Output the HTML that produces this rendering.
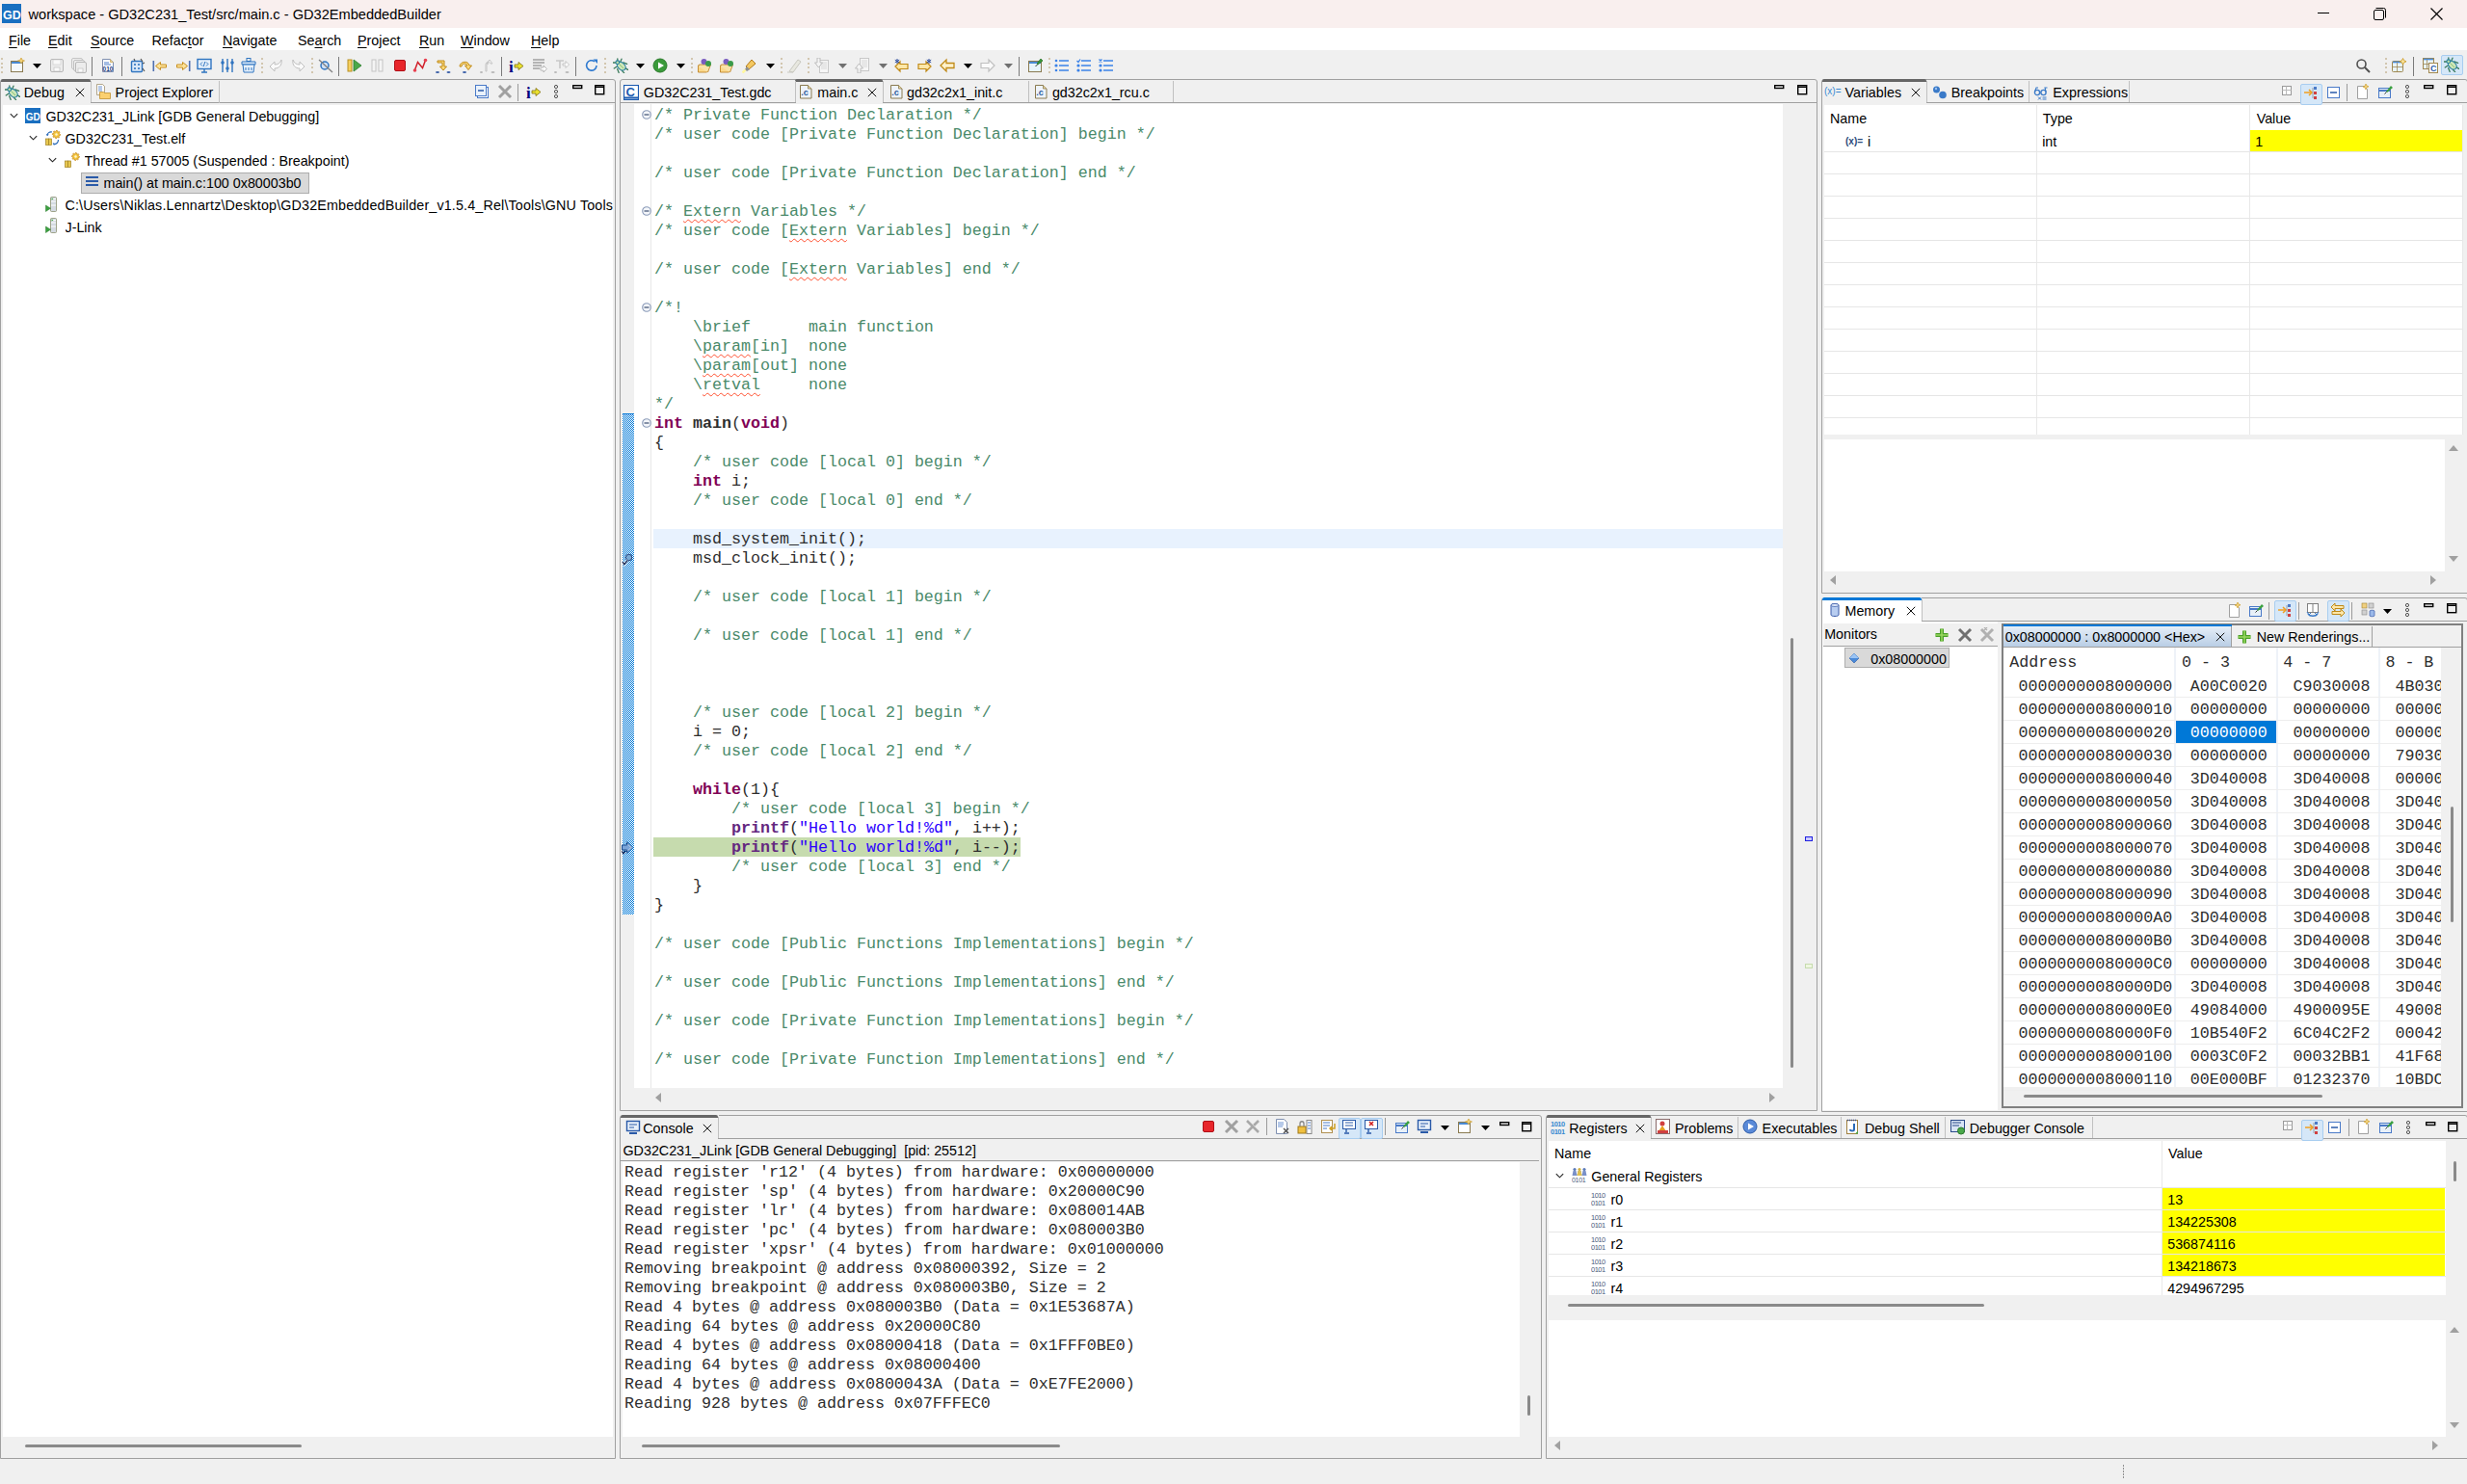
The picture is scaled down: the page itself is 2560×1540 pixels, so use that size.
<!DOCTYPE html><html><head><meta charset="utf-8"><title>GD32EmbeddedBuilder</title><style>
*{margin:0;padding:0;box-sizing:border-box}
html,body{width:2560px;height:1540px;overflow:hidden;background:#f0f0f0;font-family:"Liberation Sans",sans-serif;color:#000}
div{position:absolute}
.t{white-space:pre;font-size:14.3px;line-height:18px;color:#000}
.m{white-space:pre;font-family:"Liberation Mono",monospace;font-size:16.67px;line-height:20px;color:#2e2e2e}
.ic{line-height:0}
.ic svg{display:block}
.c{color:#4a8a6a}
.k{color:#7f0055;font-weight:bold}
.s{color:#2a00ff}
.f{color:#642880;font-weight:bold}
.b{font-weight:bold}
.sq{text-decoration:underline wavy #ff5030;text-decoration-thickness:1px;text-underline-offset:3px}
u{text-decoration:underline;text-underline-offset:2px}
</style></head><body>
<div style="left:0px;top:0px;width:2560px;height:29px;background:#f9efee"></div>
<div style="left:0px;top:29px;width:2560px;height:23px;background:#fff"></div>
<div style="left:0px;top:52px;width:2560px;height:31px;background:#f0f0f0"></div>
<div class="ic" style="left:2px;top:4px"><svg width="20" height="20" viewBox="0 0 20 20"><rect width="20" height="20" fill="#1a6fc0"/><text x="1" y="15.5" font-family="Liberation Sans" font-weight="bold" font-size="12.5" fill="#fff">GD</text></svg></div>
<div class="t" style="left:29.5px;top:5.5px;font-size:14.6px">workspace - GD32C231_Test/src/main.c - GD32EmbeddedBuilder</div>
<div style="left:2405px;top:13px;width:12px;height:1px;background:#000"></div>
<div class="ic" style="left:2463px;top:8px"><svg width="13" height="13" viewBox="0 0 13 13"><rect x="0.5" y="2.5" width="10" height="10" rx="1.5" fill="none" stroke="#000"/><path d="M2.5 0.5h8a2 2 0 0 1 2 2v8" fill="none" stroke="#000"/></svg></div>
<div class="ic" style="left:2522px;top:8px"><svg width="13" height="13" viewBox="0 0 13 13"><path d="M0.5 0.5l12 12M12.5 0.5l-12 12" stroke="#000" stroke-width="1.1"/></svg></div>
<div class="t" style="left:9px;top:32.7px;"><u>F</u>ile</div>
<div class="t" style="left:50px;top:32.7px;"><u>E</u>dit</div>
<div class="t" style="left:94px;top:32.7px;"><u>S</u>ource</div>
<div class="t" style="left:157.5px;top:32.7px;">Refac<u>t</u>or</div>
<div class="t" style="left:231px;top:32.7px;"><u>N</u>avigate</div>
<div class="t" style="left:309px;top:32.7px;">Se<u>a</u>rch</div>
<div class="t" style="left:371px;top:32.7px;"><u>P</u>roject</div>
<div class="t" style="left:435px;top:32.7px;"><u>R</u>un</div>
<div class="t" style="left:478px;top:32.7px;"><u>W</u>indow</div>
<div class="t" style="left:551px;top:32.7px;"><u>H</u>elp</div>
<div style="left:1px;top:60.0px;width:2px;height:2px;background:#c8b89a;border-radius:1px"></div>
<div style="left:1px;top:64.5px;width:2px;height:2px;background:#c8b89a;border-radius:1px"></div>
<div style="left:1px;top:69.0px;width:2px;height:2px;background:#c8b89a;border-radius:1px"></div>
<div style="left:1px;top:73.5px;width:2px;height:2px;background:#c8b89a;border-radius:1px"></div>
<div class="ic" style="left:10px;top:60px"><svg width="16" height="16" viewBox="0 0 16 16"><rect x="1.5" y="3.5" width="12" height="11" fill="#f4f8fc" stroke="#8a7a50"/><rect x="2" y="4" width="11" height="2" fill="#4b8bd4"/><path d="M12 0l1.2 2.3 2.3.7-2.3.9L12 6l-1.2-2.1L8.5 3l2.3-.7z" fill="#f5d37a" stroke="#c8961e" stroke-width=".6"/></svg></div>
<div class="ic" style="left:51px;top:60px"><svg width="16" height="16" viewBox="0 0 16 16"><rect x="1.5" y="1.5" width="13" height="13" rx="1.5" fill="#ececec" stroke="#b8b8b8"/><rect x="4" y="2" width="8" height="5" fill="#f8f8f8" stroke="#c8c8c8" stroke-width=".6"/><rect x="5" y="10" width="6" height="4" fill="#fafafa" stroke="#b8b8b8" stroke-width=".6"/></svg></div>
<div class="ic" style="left:74px;top:60px"><svg width="16" height="16" viewBox="0 0 16 16"><rect x="0.5" y="0.5" width="11" height="11" rx="1.5" fill="#eee" stroke="#c4c4c4"/><rect x="2.5" y="2.5" width="11" height="11" rx="1.5" fill="#eee" stroke="#c0c0c0"/><rect x="4.5" y="4.5" width="11" height="11" rx="1.5" fill="#ececec" stroke="#b8b8b8"/><rect x="7" y="11" width="5" height="4" fill="#fafafa" stroke="#b8b8b8" stroke-width=".6"/></svg></div>
<div class="ic" style="left:104px;top:60px"><svg width="16" height="16" viewBox="0 0 16 16"><path d="M2.5 1.5h8l3 3v10h-11z" fill="#fff" stroke="#7f8fb0"/><path d="M10.5 1.5v3h3" fill="#f0d89a" stroke="#c8a860" stroke-width=".8"/><path d="M4 5h5M4 7h7" stroke="#4a7ac8" stroke-width="1"/><text x="2.6" y="14.3" font-family="Liberation Sans" font-size="6.5" font-weight="bold" fill="#1f3f7f">010</text></svg></div>
<div class="ic" style="left:135px;top:60px"><svg width="16" height="16" viewBox="0 0 16 16"><rect x="1.5" y="3.5" width="11" height="11" rx="1" fill="#dbe9f8" stroke="#2f74c0" stroke-width="1.4"/><circle cx="5" cy="7" r="1.1" fill="#2f74c0"/><circle cx="9" cy="7" r="1.1" fill="#2f74c0"/><circle cx="5" cy="11" r="1.1" fill="#2f74c0"/><circle cx="9" cy="11" r="1.1" fill="#2f74c0"/><path d="M11 1l2 3M4 1l1 2M13 6l2 -1M13 11l2 3" stroke="#555" stroke-width="1.2"/></svg></div>
<div class="ic" style="left:158px;top:60px"><svg width="16" height="16" viewBox="0 0 16 16"><rect x="0.5" y="3" width="1.6" height="11" fill="#5070b0"/><path d="M3.5 8.5l5-4v2.5h6v3h-6v2.5z" fill="#fde39a" stroke="#c89020" stroke-width="1"/></svg></div>
<div class="ic" style="left:182px;top:60px"><svg width="16" height="16" viewBox="0 0 16 16"><rect x="13.9" y="3" width="1.6" height="11" fill="#5070b0"/><path d="M12.5 8.5l-5-4v2.5h-6v3h6v2.5z" fill="#fde39a" stroke="#c89020" stroke-width="1"/></svg></div>
<div class="ic" style="left:204px;top:60px"><svg width="16" height="16" viewBox="0 0 16 16"><rect x="1" y="1.5" width="14" height="10" fill="#e6f0fa" stroke="#2f74c0" stroke-width="1.4"/><path d="M6 4.5l-2 2 2 2M10 4.5l2 2-2 2M8.8 4l-1.6 5" stroke="#2f74c0" fill="none" stroke-width="1"/><path d="M8 12v2.5M5 15h6" stroke="#2f74c0" stroke-width="1.4"/></svg></div>
<div class="ic" style="left:228px;top:60px"><svg width="16" height="16" viewBox="0 0 16 16"><path d="M3 1v14M8 1v14M13 1v14" stroke="#2f74c0" stroke-width="1.4"/><circle cx="3" cy="5" r="1.8" fill="#2f74c0"/><circle cx="8" cy="11" r="1.8" fill="#2f74c0"/><circle cx="13" cy="5" r="1.8" fill="#2f74c0"/></svg></div>
<div class="ic" style="left:250px;top:60px"><svg width="16" height="16" viewBox="0 0 16 16"><rect x="6" y="0.5" width="4" height="3" fill="none" stroke="#2f74c0"/><path d="M1 4h14v3H1z" fill="#d8e8f8" stroke="#2f74c0"/><path d="M2 7h12l-1 8H3z" fill="#e8f2fc" stroke="#2f74c0"/><path d="M5 10v3M8 10v3M11 10v3" stroke="#2f74c0"/></svg></div>
<div class="ic" style="left:279px;top:60px"><svg width="16" height="16" viewBox="0 0 16 16"><path d="M13 2c1 5-2 9-7 9v3L1 9l5-5v3c4 0 6-2 7-5z" fill="#fafafa" stroke="#c0c0c0"/></svg></div>
<div class="ic" style="left:301px;top:60px"><svg width="16" height="16" viewBox="0 0 16 16"><path d="M3 2c-1 5 2 9 7 9v3l5-5-5-5v3c-4 0-6-2-7-5z" fill="#fafafa" stroke="#c0c0c0"/></svg></div>
<div class="ic" style="left:330px;top:60px"><svg width="16" height="16" viewBox="0 0 16 16"><circle cx="7" cy="8" r="4" fill="#cfe0f5" stroke="#2f74c0" stroke-width="1.5"/><path d="M1 2l14 13" stroke="#808080" stroke-width="1.3"/></svg></div>
<div class="ic" style="left:360px;top:60px"><svg width="16" height="16" viewBox="0 0 16 16"><rect x="1" y="2" width="4" height="12" fill="#f6d060" stroke="#b89020"/><path d="M7 2l8 6-8 6z" fill="#4aa84a" stroke="#2c7c2c" stroke-width=".8"/></svg></div>
<div class="ic" style="left:384px;top:60px"><svg width="16" height="16" viewBox="0 0 16 16"><rect x="2" y="2" width="4" height="12" fill="#f4f4f4" stroke="#c4c4c4"/><rect x="9" y="2" width="4" height="12" fill="#f4f4f4" stroke="#c4c4c4"/></svg></div>
<div class="ic" style="left:407px;top:60px"><svg width="16" height="16" viewBox="0 0 16 16"><rect x="2.5" y="2.5" width="11" height="11" rx="1.5" fill="#e8262b" stroke="#b01018"/></svg></div>
<div class="ic" style="left:428px;top:60px"><svg width="16" height="16" viewBox="0 0 16 16"><path d="M2.5 12.5l3-8 5 6 3-8" fill="none" stroke="#d0202a" stroke-width="1.5"/><circle cx="2.5" cy="13" r="1.8" fill="#e84050"/><circle cx="13.5" cy="2.5" r="1.8" fill="#e84050"/></svg></div>
<div class="ic" style="left:452px;top:60px"><svg width="16" height="16" viewBox="0 0 16 16"><path d="M2 3h7v6h2.5L8 13 4.5 9H7V5H2z" fill="#fbd979" stroke="#c08a18" stroke-width="1"/><ellipse cx="2" cy="15" rx="2" ry="1" fill="#3a5fa8"/><ellipse cx="13.5" cy="15" rx="2" ry="1" fill="#3a5fa8"/></svg></div>
<div class="ic" style="left:475px;top:60px"><svg width="16" height="16" viewBox="0 0 16 16"><path d="M2 9c0-5 9-7 10 -1h2.5l-3.5 4.5L7.5 8H10c-1-3-6-2-6 1z" fill="#fbd979" stroke="#c08a18" stroke-width="1"/><ellipse cx="7" cy="15" rx="2" ry="1" fill="#3a5fa8"/></svg></div>
<div class="ic" style="left:498px;top:60px"><svg width="16" height="16" viewBox="0 0 16 16"><path d="M6 14V7c0-3 4-4 5-1h2L10 2 7 6h2c-1-1-2 0-2 1v7z" fill="#fafafa" stroke="#c4c4c4"/><ellipse cx="1.5" cy="15" rx="1.5" ry="1" fill="#b8b8b8"/><ellipse cx="13.5" cy="15" rx="2" ry="1" fill="#b8b8b8"/></svg></div>
<div class="ic" style="left:528px;top:60px"><svg width="16" height="16" viewBox="0 0 16 16"><text x="0" y="15" font-family="Liberation Serif" font-weight="bold" font-size="17" fill="#000080">i</text><path d="M6 7h4V4.5L15 8.5l-5 4V10H6z" fill="#e8e030" stroke="#807010" stroke-width=".8"/></svg></div>
<div class="ic" style="left:552px;top:60px"><svg width="16" height="16" viewBox="0 0 16 16"><path d="M1 2h12M1 5h12M1 8h9M1 11h7" stroke="#a0a0a0" stroke-width="1.6"/><path d="M9 10h3V8l3.5 3.5L12 15v-2H9z" fill="#fff" stroke="#b0b0b0" stroke-width=".9"/></svg></div>
<div class="ic" style="left:575px;top:60px"><svg width="16" height="16" viewBox="0 0 16 16"><path d="M2 3h8M6 3v8" stroke="#c8c8c8" stroke-width="1.6"/><path d="M9 6h3V3.5L15.5 7 12 10.5V8H9z" fill="#fff" stroke="#c0c0c0" stroke-width=".9"/><ellipse cx="1.5" cy="15" rx="1.5" ry="1" fill="#b8b8b8"/><ellipse cx="13.5" cy="15" rx="2" ry="1" fill="#b8b8b8"/></svg></div>
<div class="ic" style="left:606px;top:60px"><svg width="16" height="16" viewBox="0 0 16 16"><path d="M13 8a5.2 5.2 0 1 1-2-4.2" fill="none" stroke="#2f7ad0" stroke-width="1.6"/><path d="M9.5 1.5h4.5v4.5z" fill="#2f7ad0"/></svg></div>
<div class="ic" style="left:636px;top:60px"><svg width="16" height="16" viewBox="0 0 16 16"><path d="M4.8 0.8v3M9 1.2l-1 2.6M0 5h3.2M1.2 11l3-2M10.8 4.8l3.8 1.6M12.4 10.4l3.2 2M4.6 11.6l1.6 3.8M9.4 13.2l2.2 2.4" stroke="#3a7a5a" stroke-width="1.3" stroke-linecap="round"/><ellipse cx="8.8" cy="8.6" rx="3.6" ry="5" transform="rotate(-45 8.8 8.6)" fill="#cde6b8" stroke="#2a80a0" stroke-width="1.2"/><path d="M7 7l4 4" stroke="#8cc47a" stroke-width="1"/><circle cx="4.8" cy="4.8" r="1.9" fill="#b8dca8" stroke="#2a80a0" stroke-width="1.1"/></svg></div>
<div class="ic" style="left:677px;top:60px"><svg width="16" height="16" viewBox="0 0 16 16"><circle cx="8" cy="8" r="7" fill="#3a9a3a" stroke="#2a7a2a"/><path d="M6 4.5l6 3.5-6 3.5z" fill="#fff"/></svg></div>
<div class="ic" style="left:723px;top:60px"><svg width="17" height="16" viewBox="0 0 16 16"><path d="M1 8h4l1 1h6l-2 6H1z" fill="#fbd88a" stroke="#c08428" stroke-width=".9"/><path d="M1 9l1-2h12l-3 8" fill="#f9e2a8" stroke="#c08428" stroke-width=".9"/><circle cx="7" cy="4" r="3" fill="#7a5cc0"/><circle cx="11.5" cy="6" r="3" fill="#3a9a4a"/></svg></div>
<div class="ic" style="left:746px;top:60px"><svg width="17" height="16" viewBox="0 0 16 16"><path d="M1 8h4l1 1h6l-2 6H1z" fill="#fbd88a" stroke="#c08428" stroke-width=".9"/><path d="M1 9l1-2h12l-3 8" fill="#f9e2a8" stroke="#c08428" stroke-width=".9"/><circle cx="7" cy="4" r="3" fill="#7a5cc0"/><circle cx="11.5" cy="6" r="3" fill="#3a9a4a"/></svg></div>
<div class="ic" style="left:770px;top:60px"><svg width="16" height="16" viewBox="0 0 16 16"><path d="M3 14l-1.5 1.5M4 9l6-7 4 4-7 6z" fill="#f4c860" stroke="#b07818" stroke-width="1"/><path d="M3 12l2-3 3 3-3 2z" fill="#909090"/><path d="M0.5 15.5l3-3" stroke="#fff8a0" stroke-width="2.5"/></svg></div>
<div class="ic" style="left:816px;top:60px"><svg width="16" height="16" viewBox="0 0 16 16"><path d="M1 15h6M3 14l9-12 3 2-8 11z" fill="#e8e8e0" stroke="#c8c8c0" stroke-width="1"/></svg></div>
<div class="ic" style="left:845px;top:60px"><svg width="16" height="16" viewBox="0 0 16 16"><rect x="5.5" y="2.5" width="9" height="13" fill="#f6f6f6" stroke="#c8c8c8"/><path d="M7 5h6M7 7h6M7 9h6M7 11h6" stroke="#d8d8d8"/><path d="M3 0h3v5h2.5L4.5 10 0.5 5H3z" fill="#f4f4f4" stroke="#b8b8b8" stroke-width=".9"/></svg></div>
<div class="ic" style="left:887px;top:60px"><svg width="16" height="16" viewBox="0 0 16 16"><rect x="5.5" y="0.5" width="9" height="13" fill="#f6f6f6" stroke="#c8c8c8"/><path d="M7 3h6M7 5h6M7 7h6M7 9h6" stroke="#d8d8d8"/><path d="M3 16h3v-5h2.5L4.5 6 0.5 11H3z" fill="#f4f4f4" stroke="#b8b8b8" stroke-width=".9"/></svg></div>
<div class="ic" style="left:928px;top:60px"><svg width="16" height="16" viewBox="0 0 16 16"><path d="M1 9l5-5v2.5h8v5H6v2.5z" fill="#fde7a8" stroke="#c08a18" stroke-width="1.2"/><path d="M3 1v5M0.8 2.2l4.4 2.6M0.8 4.8l4.4-2.6" stroke="#2a4a9a" stroke-width="1"/></svg></div>
<div class="ic" style="left:951px;top:60px"><svg width="16" height="16" viewBox="0 0 16 16"><path d="M15 9l-5-5v2.5H2v5h8v2.5z" fill="#fde7a8" stroke="#c08a18" stroke-width="1.2"/><path d="M13 1v5M10.8 2.2l4.4 2.6M10.8 4.8l4.4-2.6" stroke="#2a4a9a" stroke-width="1"/></svg></div>
<div class="ic" style="left:975px;top:60px"><svg width="16" height="16" viewBox="0 0 16 16"><path d="M1 8l6-6v3.5h8v5H7V14z" fill="#fff2cc" stroke="#c08a18" stroke-width="1.3"/></svg></div>
<div class="ic" style="left:1017px;top:60px"><svg width="16" height="16" viewBox="0 0 16 16"><path d="M15 8l-6-6v3.5H1v5h8V14z" fill="#fafafa" stroke="#c0c0c0" stroke-width="1.2"/></svg></div>
<div class="ic" style="left:1066px;top:60px"><svg width="16" height="16" viewBox="0 0 16 16"><rect x="1.5" y="3.5" width="13" height="11" fill="#e8f4fb" stroke="#8a7a50"/><rect x="2" y="4" width="12" height="2" fill="#4b8bd4"/><path d="M10 6l4-5 2 2-5 4z" fill="#3a9a3a" stroke="#1e6a1e" stroke-width=".7"/><path d="M8.5 9l2-2" stroke="#333" stroke-width="1"/></svg></div>
<div class="ic" style="left:1094px;top:60px"><svg width="16" height="16" viewBox="0 0 16 16"><circle cx="2" cy="3" r="1.3" fill="#3b82e8"/><circle cx="2" cy="8" r="1.6" fill="#3b82e8"/><circle cx="2" cy="13" r="1.3" fill="#3b82e8"/><path d="M5 3h10M5 8h10M5 13h10" stroke="#3b82e8" stroke-width="1.6"/></svg></div>
<div class="ic" style="left:1117px;top:60px"><svg width="16" height="16" viewBox="0 0 16 16"><path d="M0.5 3l1.5 1.5L4 1.5" stroke="#3b82e8" fill="none" stroke-width="1.3"/><circle cx="2" cy="8" r="1.6" fill="#3b82e8"/><circle cx="2" cy="13" r="1.6" fill="#3b82e8"/><path d="M5 3h10M5 8h10M5 13h10" stroke="#3b82e8" stroke-width="1.6"/></svg></div>
<div class="ic" style="left:1140px;top:60px"><svg width="16" height="16" viewBox="0 0 16 16"><path d="M0.5 1.5l3 3M3.5 1.5l-3 3" stroke="#3b82e8" stroke-width="1.3"/><circle cx="2" cy="8" r="1.6" fill="#3b82e8"/><circle cx="2" cy="13" r="1.6" fill="#3b82e8"/><path d="M5 3h10M5 8h10M5 13h10" stroke="#3b82e8" stroke-width="1.6"/></svg></div>
<div class="ic" style="left:2444px;top:60px"><svg width="16" height="16" viewBox="0 0 16 16"><circle cx="6.5" cy="6.5" r="4.5" fill="none" stroke="#505050" stroke-width="1.6"/><path d="M10 10l5 5" stroke="#505050" stroke-width="2"/></svg></div>
<div class="ic" style="left:2482px;top:60px"><svg width="16" height="16" viewBox="0 0 16 16"><rect x="0.5" y="3.5" width="11" height="11" rx="1" fill="#e8f4fc" stroke="#a08850"/><path d="M1 4.5h10" stroke="#4b8bd4" stroke-width="1.6"/><path d="M0.5 9.5h11M5.5 5v9" stroke="#a08850" stroke-width=".8"/><path d="M11.5 0.5l1.2 2.3 2.3 1-2.3 1-1.2 2.3-1.2-2.3-2.3-1 2.3-1z" fill="#fbe49a" stroke="#c8961e" stroke-width=".8"/></svg></div>
<div class="ic" style="left:2514px;top:60px"><svg width="16" height="16" viewBox="0 0 16 16"><rect x="0.5" y="0.5" width="11" height="11" fill="#e8f4fc" stroke="#a08850"/><path d="M1 1.5h10" stroke="#4b8bd4" stroke-width="1.6"/><path d="M0.5 6.5h11M4.5 2v9" stroke="#a08850" stroke-width=".8"/><rect x="6.5" y="5.5" width="9" height="10" fill="#fff" stroke="#a08850"/><text x="8" y="14" font-family="Liberation Sans" font-weight="bold" font-size="9" fill="#2a5aa8">C</text></svg></div>
<div class="ic" style="left:33px;top:64px"><svg width="11" height="8" viewBox="0 0 11 8"><path d="M1 2h9l-4.5 5z" fill="#000"/></svg></div>
<div class="ic" style="left:659px;top:64px"><svg width="11" height="8" viewBox="0 0 11 8"><path d="M1 2h9l-4.5 5z" fill="#000"/></svg></div>
<div class="ic" style="left:701px;top:64px"><svg width="11" height="8" viewBox="0 0 11 8"><path d="M1 2h9l-4.5 5z" fill="#000"/></svg></div>
<div class="ic" style="left:794px;top:64px"><svg width="11" height="8" viewBox="0 0 11 8"><path d="M1 2h9l-4.5 5z" fill="#000"/></svg></div>
<div class="ic" style="left:999px;top:64px"><svg width="11" height="8" viewBox="0 0 11 8"><path d="M1 2h9l-4.5 5z" fill="#000"/></svg></div>
<div class="ic" style="left:869px;top:64px"><svg width="11" height="8" viewBox="0 0 11 8"><path d="M1 2h9l-4.5 5z" fill="#707070"/></svg></div>
<div class="ic" style="left:911px;top:64px"><svg width="11" height="8" viewBox="0 0 11 8"><path d="M1 2h9l-4.5 5z" fill="#707070"/></svg></div>
<div class="ic" style="left:1041px;top:64px"><svg width="11" height="8" viewBox="0 0 11 8"><path d="M1 2h9l-4.5 5z" fill="#707070"/></svg></div>
<div style="left:95px;top:59px;width:1px;height:20px;background:#7a7a7a"></div>
<div style="left:126px;top:59px;width:1px;height:20px;background:#7a7a7a"></div>
<div style="left:271px;top:60.0px;width:2px;height:2px;background:#c8b89a;border-radius:1px"></div>
<div style="left:271px;top:64.5px;width:2px;height:2px;background:#c8b89a;border-radius:1px"></div>
<div style="left:271px;top:69.0px;width:2px;height:2px;background:#c8b89a;border-radius:1px"></div>
<div style="left:271px;top:73.5px;width:2px;height:2px;background:#c8b89a;border-radius:1px"></div>
<div style="left:323px;top:60.0px;width:2px;height:2px;background:#c8b89a;border-radius:1px"></div>
<div style="left:323px;top:64.5px;width:2px;height:2px;background:#c8b89a;border-radius:1px"></div>
<div style="left:323px;top:69.0px;width:2px;height:2px;background:#c8b89a;border-radius:1px"></div>
<div style="left:323px;top:73.5px;width:2px;height:2px;background:#c8b89a;border-radius:1px"></div>
<div style="left:351px;top:59px;width:1px;height:20px;background:#7a7a7a"></div>
<div style="left:520px;top:59px;width:1px;height:20px;background:#7a7a7a"></div>
<div style="left:597px;top:59px;width:1px;height:20px;background:#7a7a7a"></div>
<div style="left:627px;top:60.0px;width:2px;height:2px;background:#c8b89a;border-radius:1px"></div>
<div style="left:627px;top:64.5px;width:2px;height:2px;background:#c8b89a;border-radius:1px"></div>
<div style="left:627px;top:69.0px;width:2px;height:2px;background:#c8b89a;border-radius:1px"></div>
<div style="left:627px;top:73.5px;width:2px;height:2px;background:#c8b89a;border-radius:1px"></div>
<div style="left:717px;top:60.0px;width:2px;height:2px;background:#c8b89a;border-radius:1px"></div>
<div style="left:717px;top:64.5px;width:2px;height:2px;background:#c8b89a;border-radius:1px"></div>
<div style="left:717px;top:69.0px;width:2px;height:2px;background:#c8b89a;border-radius:1px"></div>
<div style="left:717px;top:73.5px;width:2px;height:2px;background:#c8b89a;border-radius:1px"></div>
<div style="left:810px;top:60.0px;width:2px;height:2px;background:#c8b89a;border-radius:1px"></div>
<div style="left:810px;top:64.5px;width:2px;height:2px;background:#c8b89a;border-radius:1px"></div>
<div style="left:810px;top:69.0px;width:2px;height:2px;background:#c8b89a;border-radius:1px"></div>
<div style="left:810px;top:73.5px;width:2px;height:2px;background:#c8b89a;border-radius:1px"></div>
<div style="left:838px;top:60.0px;width:2px;height:2px;background:#c8b89a;border-radius:1px"></div>
<div style="left:838px;top:64.5px;width:2px;height:2px;background:#c8b89a;border-radius:1px"></div>
<div style="left:838px;top:69.0px;width:2px;height:2px;background:#c8b89a;border-radius:1px"></div>
<div style="left:838px;top:73.5px;width:2px;height:2px;background:#c8b89a;border-radius:1px"></div>
<div style="left:1057px;top:59px;width:1px;height:20px;background:#7a7a7a"></div>
<div style="left:1088px;top:60.0px;width:2px;height:2px;background:#c8b89a;border-radius:1px"></div>
<div style="left:1088px;top:64.5px;width:2px;height:2px;background:#c8b89a;border-radius:1px"></div>
<div style="left:1088px;top:69.0px;width:2px;height:2px;background:#c8b89a;border-radius:1px"></div>
<div style="left:1088px;top:73.5px;width:2px;height:2px;background:#c8b89a;border-radius:1px"></div>
<div style="left:2475px;top:60.0px;width:2px;height:2px;background:#c8b89a;border-radius:1px"></div>
<div style="left:2475px;top:64.5px;width:2px;height:2px;background:#c8b89a;border-radius:1px"></div>
<div style="left:2475px;top:69.0px;width:2px;height:2px;background:#c8b89a;border-radius:1px"></div>
<div style="left:2475px;top:73.5px;width:2px;height:2px;background:#c8b89a;border-radius:1px"></div>
<div style="left:2504px;top:59px;width:1px;height:20px;background:#7a7a7a"></div>
<div style="left:2533px;top:57px;width:23px;height:21px;background:#d5e7f8;border:1px solid #a8cdf0;border-radius:2px"></div>
<div class="ic" style="left:2536px;top:59px"><svg width="16" height="16" viewBox="0 0 16 16"><path d="M4.8 0.8v3M9 1.2l-1 2.6M0 5h3.2M1.2 11l3-2M10.8 4.8l3.8 1.6M12.4 10.4l3.2 2M4.6 11.6l1.6 3.8M9.4 13.2l2.2 2.4" stroke="#3a7a5a" stroke-width="1.3" stroke-linecap="round"/><ellipse cx="8.8" cy="8.6" rx="3.6" ry="5" transform="rotate(-45 8.8 8.6)" fill="#cde6b8" stroke="#2a80a0" stroke-width="1.2"/><path d="M7 7l4 4" stroke="#8cc47a" stroke-width="1"/><circle cx="4.8" cy="4.8" r="1.9" fill="#b8dca8" stroke="#2a80a0" stroke-width="1.1"/></svg></div>
<div style="left:0px;top:82px;width:639px;height:1432px;border:1px solid #a0a0a0;border-radius:3px 3px 0 0;background:#f0f0f0"></div>
<div style="left:94px;top:106px;width:544px;height:1px;background:#a0a0a0"></div>
<div style="left:227px;top:84px;width:1px;height:23px;background:#c0c0c0"></div>
<div style="left:1px;top:82px;width:93px;height:3px;background:#666;border-radius:2px 2px 0 0"></div>
<div style="left:94px;top:84px;width:1px;height:22px;background:#c0c0c0"></div>
<div class="ic" style="left:5px;top:88px"><svg width="16" height="16" viewBox="0 0 16 16"><path d="M4.8 0.8v3M9 1.2l-1 2.6M0 5h3.2M1.2 11l3-2M10.8 4.8l3.8 1.6M12.4 10.4l3.2 2M4.6 11.6l1.6 3.8M9.4 13.2l2.2 2.4" stroke="#3a7a5a" stroke-width="1.3" stroke-linecap="round"/><ellipse cx="8.8" cy="8.6" rx="3.6" ry="5" transform="rotate(-45 8.8 8.6)" fill="#cde6b8" stroke="#2a80a0" stroke-width="1.2"/><path d="M7 7l4 4" stroke="#8cc47a" stroke-width="1"/><circle cx="4.8" cy="4.8" r="1.9" fill="#b8dca8" stroke="#2a80a0" stroke-width="1.1"/></svg></div>
<div class="t" style="left:24.8px;top:86.9px;">Debug</div>
<div class="ic" style="left:78px;top:91px"><svg width="10" height="10" viewBox="0 0 10 10"><path d="M0.8 0.8l8.4 8.4M9.2 0.8l-8.4 8.4" stroke="#111" stroke-width="1"/></svg></div>
<div class="ic" style="left:99px;top:87px"><svg width="16" height="16" viewBox="0 0 16 16"><path d="M1.5 0.5h6l2 2v9h-8z" fill="#fff" stroke="#a09070" stroke-width=".8"/><path d="M3 3h4M3 5h4M3 7h4" stroke="#4a7ac8" stroke-width=".8"/><path d="M4.5 8.5h4l1 1h6v6h-11z" fill="#fbd070" stroke="#c09030" stroke-width=".8"/></svg></div>
<div class="t" style="left:119.6px;top:86.9px;">Project Explorer</div>
<div class="ic" style="left:492px;top:87px"><svg width="16" height="16" viewBox="0 0 16 16"><rect x="3.5" y="3.5" width="11" height="11" fill="#fff" stroke="#4a7ac8"/><rect x="1.5" y="1.5" width="11" height="11" fill="#eaf2fb" stroke="#4a7ac8"/><path d="M4 7h6" stroke="#2a5aa8" stroke-width="1.5"/></svg></div>
<div class="ic" style="left:516px;top:87px"><svg width="16" height="16" viewBox="0 0 16 16"><path d="M2 2l12 12M14 2L2 14" stroke="#a0a0a0" stroke-width="3"/></svg></div>
<div style="left:537px;top:87px;width:1px;height:18px;background:#9a9a9a"></div>
<div class="ic" style="left:546px;top:87px"><svg width="16" height="16" viewBox="0 0 16 16"><text x="0" y="15" font-family="Liberation Serif" font-weight="bold" font-size="17" fill="#000080">i</text><path d="M6 7h4V4.5L15 8.5l-5 4V10H6z" fill="#e8e030" stroke="#807010" stroke-width=".8"/></svg></div>
<div class="ic" style="left:574px;top:88px"><svg width="6" height="14" viewBox="0 0 6 14"><circle cx="3" cy="2" r="1.6" fill="none" stroke="#444" stroke-width=".9"/><circle cx="3" cy="7" r="1.6" fill="none" stroke="#444" stroke-width=".9"/><circle cx="3" cy="12" r="1.6" fill="none" stroke="#444" stroke-width=".9"/></svg></div>
<div class="ic" style="left:594px;top:88px"><svg width="11" height="5" viewBox="0 0 11 5"><rect x="0.7" y="0.7" width="9" height="2.8" fill="none" stroke="#000" stroke-width="1.4"/></svg></div>
<div class="ic" style="left:617px;top:88px"><svg width="11" height="11" viewBox="0 0 11 11"><rect x="0.7" y="0.7" width="9" height="9" fill="none" stroke="#000" stroke-width="1.4"/><path d="M0.7 2.3h9" stroke="#000" stroke-width="1.4"/></svg></div>
<div style="left:3px;top:109px;width:633px;height:1382px;background:#fff"></div>
<div class="ic" style="left:9.6px;top:117.4px"><svg width="10" height="7" viewBox="0 0 10 7"><path d="M0.8 1.2l3.7 3.6 3.7-3.6" fill="none" stroke="#222" stroke-width="1.1"/></svg></div>
<div class="ic" style="left:26px;top:111.9px"><svg width="16" height="16" viewBox="0 0 16 16"><rect width="16" height="16" fill="#1a6fc0"/><text x="0.8" y="12.5" font-family="Liberation Sans" font-weight="bold" font-size="10" fill="#fff">GD</text></svg></div>
<div class="t" style="left:47.5px;top:112.4px;width:588.5px;overflow:hidden">GD32C231_JLink [GDB General Debugging]</div>
<div class="ic" style="left:29.6px;top:140.3px"><svg width="10" height="7" viewBox="0 0 10 7"><path d="M0.8 1.2l3.7 3.6 3.7-3.6" fill="none" stroke="#222" stroke-width="1.1"/></svg></div>
<div class="ic" style="left:47px;top:134.8px"><svg width="16" height="16" viewBox="0 0 16 16"><rect x="0.5" y="9" width="3" height="6.5" fill="#e8c850" stroke="#a08020" stroke-width=".7"/><rect x="3.5" y="9" width="3" height="6.5" fill="#e8c850" stroke="#a08020" stroke-width=".7"/><path d="M15.70 4.50 L15.62 5.32 L14.27 5.65 L13.99 6.17 L14.47 7.47 L13.83 7.99 L12.65 7.27 L12.09 7.44 L11.50 8.70 L10.68 8.62 L10.35 7.27 L9.83 6.99 L8.53 7.47 L8.01 6.83 L8.73 5.65 L8.56 5.09 L7.30 4.50 L7.38 3.68 L8.73 3.35 L9.01 2.83 L8.53 1.53 L9.17 1.01 L10.35 1.73 L10.91 1.56 L11.50 0.30 L12.32 0.38 L12.65 1.73 L13.17 2.01 L14.47 1.53 L14.99 2.17 L14.27 3.35 L14.44 3.91Z" fill="#f6c840" stroke="#c08010" stroke-width=".7"/><circle cx="11.5" cy="4.5" r="1.2" fill="#fff6d0"/><path d="M2 5.5c0-2.5 2.5-4 5-3.5M13.5 10c0 2.5-2 4.5-5 5" fill="none" stroke="#2a6ab8" stroke-width="1.2"/><path d="M1 4l1 2.2 1.8-1.6zM7.5 14l2 1.5-.3-2.4z" fill="#2a6ab8"/></svg></div>
<div class="t" style="left:67.5px;top:135.3px;width:568.5px;overflow:hidden">GD32C231_Test.elf</div>
<div class="ic" style="left:49.6px;top:163.2px"><svg width="10" height="7" viewBox="0 0 10 7"><path d="M0.8 1.2l3.7 3.6 3.7-3.6" fill="none" stroke="#222" stroke-width="1.1"/></svg></div>
<div class="ic" style="left:67px;top:157.7px"><svg width="16" height="16" viewBox="0 0 16 16"><rect x="0.5" y="9" width="3" height="6.5" fill="#e8c850" stroke="#a08020" stroke-width=".7"/><rect x="3.5" y="9" width="3" height="6.5" fill="#e8c850" stroke="#a08020" stroke-width=".7"/><path d="M15.50 4.50 L15.42 5.28 L14.18 5.61 L13.91 6.11 L14.33 7.33 L13.72 7.83 L12.61 7.18 L12.07 7.34 L11.50 8.50 L10.72 8.42 L10.39 7.18 L9.89 6.91 L8.67 7.33 L8.17 6.72 L8.82 5.61 L8.66 5.07 L7.50 4.50 L7.58 3.72 L8.82 3.39 L9.09 2.89 L8.67 1.67 L9.28 1.17 L10.39 1.82 L10.93 1.66 L11.50 0.50 L12.28 0.58 L12.61 1.82 L13.11 2.09 L14.33 1.67 L14.83 2.28 L14.18 3.39 L14.34 3.93Z" fill="#f6c840" stroke="#c08010" stroke-width=".7"/><circle cx="11.5" cy="4.5" r="1.2" fill="#fff6d0"/></svg></div>
<div class="t" style="left:87.5px;top:158.2px;width:548.5px;overflow:hidden">Thread #1 57005 (Suspended : Breakpoint)</div>
<div style="left:84px;top:178.5px;width:237px;height:22px;background:#d9d9d9;border:1px solid #adadad"></div>
<div class="ic" style="left:88px;top:180.6px"><svg width="16" height="16" viewBox="0 0 16 16"><path d="M1 3h13M1 7h13M1 11h13" stroke="#2a5aa8" stroke-width="2"/></svg></div>
<div class="t" style="left:107.5px;top:181.1px;width:528.5px;overflow:hidden">main() at main.c:100 0x80003b0</div>
<div class="ic" style="left:47px;top:203.5px"><svg width="16" height="16" viewBox="0 0 16 16"><rect x="5.5" y="0.5" width="6" height="15" rx="1" fill="#d4dae2" stroke="#8a9070" stroke-width=".8"/><path d="M6 2.5h5M6 5h5M6 9h5" stroke="#fff" stroke-width="1"/><path d="M6.5 1.5l2 1-2 1z" fill="#3aa040"/><path d="M0.5 9l5 3.2-5 3.3z" fill="#3aa040" stroke="#2a7a2a" stroke-width=".5"/></svg></div>
<div class="t" style="left:67.5px;top:204.0px;width:568.5px;overflow:hidden;letter-spacing:0.16px">C:\Users\Niklas.Lennartz\Desktop\GD32EmbeddedBuilder_v1.5.4_Rel\Tools\GNU Tools for ARM Embedded Processors</div>
<div class="ic" style="left:47px;top:226.4px"><svg width="16" height="16" viewBox="0 0 16 16"><rect x="5.5" y="0.5" width="6" height="15" rx="1" fill="#d4dae2" stroke="#8a9070" stroke-width=".8"/><path d="M6 2.5h5M6 5h5M6 9h5" stroke="#fff" stroke-width="1"/><path d="M6.5 1.5l2 1-2 1z" fill="#3aa040"/><path d="M0.5 9l5 3.2-5 3.3z" fill="#3aa040" stroke="#2a7a2a" stroke-width=".5"/></svg></div>
<div class="t" style="left:67.5px;top:226.9px;width:568.5px;overflow:hidden">J-Link</div>
<div style="left:636px;top:109px;width:2px;height:1382px;background:#f0f0f0"></div>
<div style="left:26px;top:1499px;width:287px;height:3px;background:#8a8a8a;border-radius:2px"></div>
<div style="left:643px;top:82px;width:1243px;height:1071px;border:1px solid #a0a0a0;border-radius:3px 3px 0 0;background:#f0f0f0"></div>
<div style="left:644px;top:106px;width:1241px;height:1px;background:#a0a0a0"></div>
<div style="left:825px;top:82px;width:91px;height:3px;background:#666;border-radius:2px 2px 0 0"></div>
<div style="left:825px;top:84px;width:1px;height:22px;background:#c0c0c0"></div>
<div style="left:916px;top:84px;width:1px;height:22px;background:#c0c0c0"></div>
<div style="left:1067px;top:84px;width:1px;height:22px;background:#c0c0c0"></div>
<div style="left:1217px;top:84px;width:1px;height:22px;background:#c0c0c0"></div>
<div style="left:826px;top:106px;width:90px;height:1px;background:#f0f0f0"></div>
<div class="ic" style="left:647px;top:88px"><svg width="16" height="16" viewBox="0 0 16 16"><rect x="0.5" y="0.5" width="15" height="15" fill="#fff" stroke="#1a5ab0" stroke-width="1.2"/><path d="M0.5 13.5h15" stroke="#1a5ab0" stroke-width="2"/><text x="2.5" y="12" font-family="Liberation Sans" font-weight="bold" font-size="13" fill="#1a5ab0">C</text></svg></div>
<div class="t" style="left:667.8px;top:86.9px;">GD32C231_Test.gdc</div>
<div class="ic" style="left:830px;top:88px"><svg width="13" height="15" viewBox="0 0 13 15"><path d="M0.5 0.5h8l3.5 3.5v10h-11.5z" fill="#eef3fa" stroke="#8a7a50"/><path d="M8.5 0.5v3.5h3.5" fill="#e8d8a0" stroke="#8a7a50" stroke-width=".8"/><text x="1.2" y="11" font-family="Liberation Sans" font-weight="bold" font-size="9" fill="#2a5a9a">.c</text></svg></div>
<div class="t" style="left:848.3px;top:86.9px;">main.c</div>
<div class="ic" style="left:900px;top:91px"><svg width="10" height="10" viewBox="0 0 10 10"><path d="M0.8 0.8l8.4 8.4M9.2 0.8l-8.4 8.4" stroke="#111" stroke-width="1"/></svg></div>
<div class="ic" style="left:924px;top:88px"><svg width="13" height="15" viewBox="0 0 13 15"><path d="M0.5 0.5h8l3.5 3.5v10h-11.5z" fill="#eef3fa" stroke="#8a7a50"/><path d="M8.5 0.5v3.5h3.5" fill="#e8d8a0" stroke="#8a7a50" stroke-width=".8"/><text x="1.2" y="11" font-family="Liberation Sans" font-weight="bold" font-size="9" fill="#2a5a9a">.c</text></svg></div>
<div class="t" style="left:941px;top:86.9px;">gd32c2x1_init.c</div>
<div class="ic" style="left:1074px;top:88px"><svg width="13" height="15" viewBox="0 0 13 15"><path d="M0.5 0.5h8l3.5 3.5v10h-11.5z" fill="#eef3fa" stroke="#8a7a50"/><path d="M8.5 0.5v3.5h3.5" fill="#e8d8a0" stroke="#8a7a50" stroke-width=".8"/><text x="1.2" y="11" font-family="Liberation Sans" font-weight="bold" font-size="9" fill="#2a5a9a">.c</text></svg></div>
<div class="t" style="left:1091.9px;top:86.9px;">gd32c2x1_rcu.c</div>
<div class="ic" style="left:1841px;top:88px"><svg width="11" height="5" viewBox="0 0 11 5"><rect x="0.7" y="0.7" width="9" height="2.8" fill="none" stroke="#000" stroke-width="1.4"/></svg></div>
<div class="ic" style="left:1865px;top:88px"><svg width="11" height="11" viewBox="0 0 11 11"><rect x="0.7" y="0.7" width="9" height="9" fill="none" stroke="#000" stroke-width="1.4"/><path d="M0.7 2.3h9" stroke="#000" stroke-width="1.4"/></svg></div>
<div style="left:658px;top:108px;width:1192px;height:1021px;background:#fff"></div>
<div style="left:675px;top:108px;width:1px;height:1021px;background:#e8e8e8"></div>
<div style="left:646px;top:429px;width:12px;height:520px;background:repeating-conic-gradient(#0078d7 0 25%,#fff 0 50%) 0 0/2px 2px"></div>
<div style="left:646px;top:429px;width:12px;height:1px;background:#0078d7"></div>
<div style="left:678px;top:549px;width:1172px;height:20px;background:#e8f2fe"></div>
<div style="left:678px;top:869px;width:381px;height:20px;background:#c6dbae"></div>
<div class="ic" style="left:666px;top:114px"><svg width="10" height="10" viewBox="0 0 10 10"><circle cx="5" cy="5" r="4.3" fill="#f4f6fa" stroke="#8a9ab8" stroke-width="1.1"/><path d="M2.5 5h5" stroke="#4a5a7a" stroke-width="1.3"/></svg></div>
<div class="m" style="left:679px;top:110px;"><span class="c">/* Private Function Declaration */</span></div>
<div class="m" style="left:679px;top:130px;"><span class="c">/* user code [Private Function Declaration] begin */</span></div>
<div class="m" style="left:679px;top:170px;"><span class="c">/* user code [Private Function Declaration] end */</span></div>
<div class="ic" style="left:666px;top:214px"><svg width="10" height="10" viewBox="0 0 10 10"><circle cx="5" cy="5" r="4.3" fill="#f4f6fa" stroke="#8a9ab8" stroke-width="1.1"/><path d="M2.5 5h5" stroke="#4a5a7a" stroke-width="1.3"/></svg></div>
<div class="m" style="left:679px;top:210px;"><span class="c">/* <span class="sq">Extern</span> Variables */</span></div>
<div class="m" style="left:679px;top:230px;"><span class="c">/* user code [<span class="sq">Extern</span> Variables] begin */</span></div>
<div class="m" style="left:679px;top:270px;"><span class="c">/* user code [<span class="sq">Extern</span> Variables] end */</span></div>
<div class="ic" style="left:666px;top:314px"><svg width="10" height="10" viewBox="0 0 10 10"><circle cx="5" cy="5" r="4.3" fill="#f4f6fa" stroke="#8a9ab8" stroke-width="1.1"/><path d="M2.5 5h5" stroke="#4a5a7a" stroke-width="1.3"/></svg></div>
<div class="m" style="left:679px;top:310px;"><span class="c">/*!</span></div>
<div class="m" style="left:679px;top:330px;"><span class="c">    \brief      main function</span></div>
<div class="m" style="left:679px;top:350px;"><span class="c">    \<span class="sq">param</span>[in]  none</span></div>
<div class="m" style="left:679px;top:370px;"><span class="c">    \<span class="sq">param</span>[out] none</span></div>
<div class="m" style="left:679px;top:390px;"><span class="c">    \<span class="sq">retval</span>     none</span></div>
<div class="m" style="left:679px;top:410px;"><span class="c">*/</span></div>
<div class="ic" style="left:666px;top:434px"><svg width="10" height="10" viewBox="0 0 10 10"><circle cx="5" cy="5" r="4.3" fill="#f4f6fa" stroke="#8a9ab8" stroke-width="1.1"/><path d="M2.5 5h5" stroke="#4a5a7a" stroke-width="1.3"/></svg></div>
<div class="m" style="left:679px;top:430px;"><span class="k">int</span> <span class="b">main</span>(<span class="k">void</span>)</div>
<div class="m" style="left:679px;top:450px;">{</div>
<div class="m" style="left:679px;top:470px;">    <span class="c">/* user code [local 0] begin */</span></div>
<div class="m" style="left:679px;top:490px;">    <span class="k">int</span> i;</div>
<div class="m" style="left:679px;top:510px;">    <span class="c">/* user code [local 0] end */</span></div>
<div class="m" style="left:679px;top:550px;">    msd_system_init();</div>
<div class="ic" style="left:644px;top:573px"><svg width="16" height="16" viewBox="0 0 16 16"><circle cx="8.6" cy="5.5" r="3.2" fill="#7aaad6" stroke="#1a3a78" stroke-width="1"/><path d="M2 10l1.8 2.6 3.6-4.2" fill="none" stroke="#fff" stroke-width="2.6"/><path d="M2 10l1.8 2.6 3.6-4.2" fill="none" stroke="#0a1a4a" stroke-width="1.3"/></svg></div>
<div class="m" style="left:679px;top:570px;">    msd_clock_init();</div>
<div class="m" style="left:679px;top:610px;">    <span class="c">/* user code [local 1] begin */</span></div>
<div class="m" style="left:679px;top:650px;">    <span class="c">/* user code [local 1] end */</span></div>
<div class="m" style="left:679px;top:730px;">    <span class="c">/* user code [local 2] begin */</span></div>
<div class="m" style="left:679px;top:750px;">    i = 0;</div>
<div class="m" style="left:679px;top:770px;">    <span class="c">/* user code [local 2] end */</span></div>
<div class="m" style="left:679px;top:810px;">    <span class="k">while</span>(1){</div>
<div class="m" style="left:679px;top:830px;">        <span class="c">/* user code [local 3] begin */</span></div>
<div class="m" style="left:679px;top:850px;">        <span class="f">printf</span>(<span class="s">"Hello world!%d"</span>, i++);</div>
<div class="ic" style="left:645px;top:873px"><svg width="12" height="14" viewBox="0 0 12 14"><path d="M0.5 4h5V0.8L11 6.5 5.5 12.2V9H0.5z" fill="#7aa4d8" stroke="#1a4a8a" stroke-width="1"/><path d="M7 3.5l3 3-3 3" fill="none" stroke="#dbe8f6" stroke-width=".9"/><path d="M0.3 10.3l1.6 2.5 2.2-3" fill="none" stroke="#0a1a4a" stroke-width="1.2"/></svg></div>
<div class="m" style="left:679px;top:870px;">        <span class="f">printf</span>(<span class="s">"Hello world!%d"</span>, i--);</div>
<div class="m" style="left:679px;top:890px;">        <span class="c">/* user code [local 3] end */</span></div>
<div class="m" style="left:679px;top:910px;">    }</div>
<div class="m" style="left:679px;top:930px;">}</div>
<div class="m" style="left:679px;top:970px;"><span class="c">/* user code [Public Functions Implementations] begin */</span></div>
<div class="m" style="left:679px;top:1010px;"><span class="c">/* user code [Public Functions Implementations] end */</span></div>
<div class="m" style="left:679px;top:1050px;"><span class="c">/* user code [Private Function Implementations] begin */</span></div>
<div class="m" style="left:679px;top:1090px;"><span class="c">/* user code [Private Function Implementations] end */</span></div>
<div style="left:1858px;top:662px;width:3px;height:446px;background:#8a8a8a;border-radius:2px"></div>
<div style="left:1873px;top:868px;width:8px;height:5px;background:#c8c8ff;border:1px solid #2020e0"></div>
<div style="left:1873px;top:1000px;width:8px;height:5px;background:#eef6e0;border:1px solid #c6dbae"></div>
<div class="ic" style="left:680px;top:1134px"><svg width="6" height="10" viewBox="0 0 6 10"><path d="M6 0v10L0 5z" fill="#a0a0a0"/></svg></div>
<div class="ic" style="left:1836px;top:1134px"><svg width="6" height="10" viewBox="0 0 6 10"><path d="M0 0v10l6-5z" fill="#a0a0a0"/></svg></div>
<div style="left:1890px;top:82px;width:671px;height:534px;border:1px solid #a0a0a0;border-radius:3px 3px 0 0;background:#f0f0f0"></div>
<div style="left:1999px;top:106px;width:561px;height:1px;background:#a0a0a0"></div>
<div style="left:1891px;top:82px;width:108px;height:3px;background:#666;border-radius:2px 2px 0 0"></div>
<div style="left:1999px;top:84px;width:1px;height:22px;background:#c0c0c0"></div>
<div style="left:2105px;top:84px;width:1px;height:22px;background:#c0c0c0"></div>
<div style="left:2209px;top:84px;width:1px;height:22px;background:#c0c0c0"></div>
<div class="ic" style="left:1893px;top:87px"><svg width="22" height="14" viewBox="0 0 22 14"><text x="0" y="11" font-family="Liberation Sans" font-size="10" fill="#3a8ad0">(x)=</text></svg></div>
<div class="t" style="left:1914.5px;top:86.9px;">Variables</div>
<div class="ic" style="left:1983px;top:91px"><svg width="10" height="10" viewBox="0 0 10 10"><path d="M0.8 0.8l8.4 8.4M9.2 0.8l-8.4 8.4" stroke="#111" stroke-width="1"/></svg></div>
<div class="ic" style="left:2005px;top:88px"><svg width="16" height="16" viewBox="0 0 16 16"><circle cx="4.5" cy="5" r="3.5" fill="#3a7ac8"/><circle cx="11" cy="10.5" r="3.8" fill="#3a7ac8"/><circle cx="4" cy="4" r="1.2" fill="#9ac0f0"/></svg></div>
<div class="t" style="left:2024.7px;top:86.9px;">Breakpoints</div>
<div class="ic" style="left:2110px;top:88px"><svg width="16" height="16" viewBox="0 0 16 16"><circle cx="4" cy="8" r="2.6" fill="none" stroke="#3a7ac8" stroke-width="1.3"/><circle cx="10.5" cy="8" r="2.6" fill="none" stroke="#3a7ac8" stroke-width="1.3"/><path d="M6.6 8h1.3M1.4 7.5L3 3h2M13.1 7.5L12 3h2.5" fill="none" stroke="#3a7ac8" stroke-width="1.1"/><path d="M5 12.5l3 3M8 12.5l-3 3M9.5 13h4M9.5 15h4" stroke="#3a7ac8" stroke-width="1"/></svg></div>
<div class="t" style="left:2130.3px;top:86.9px;">Expressions</div>
<div class="ic" style="left:2367px;top:88px"><svg width="16" height="16" viewBox="0 0 16 16"><rect x="1.5" y="1.5" width="9" height="9" fill="#fff" stroke="#999"/><path d="M1.5 5.5h9M5.5 1.5v9" stroke="#bbb"/></svg></div>
<div style="left:2387px;top:87px;width:23px;height:22px;background:#d5e7f8;border:1px solid #a8cdf0;border-radius:2px"></div>
<div class="ic" style="left:2390px;top:88px"><svg width="16" height="16" viewBox="0 0 16 16"><path d="M1 8h7" stroke="#f0a020" stroke-width="1.5"/><path d="M6 5l3 3-3 3" fill="none" stroke="#f0a020" stroke-width="1.5"/><rect x="11" y="2" width="3" height="3" fill="#4a7ac8"/><rect x="11" y="7" width="3" height="3" fill="#d04040"/><rect x="11" y="12" width="3" height="3" fill="#d04040"/><path d="M10 3v11" stroke="#777" stroke-width=".6"/></svg></div>
<div class="ic" style="left:2414px;top:88px"><svg width="16" height="16" viewBox="0 0 16 16"><rect x="1.5" y="2.5" width="12" height="11" fill="#fff" stroke="#4a7ac8"/><path d="M4 8h7" stroke="#2a5aa8" stroke-width="1.5"/></svg></div>
<div style="left:2435px;top:87px;width:1px;height:18px;background:#9a9a9a"></div>
<div class="ic" style="left:2444px;top:87px"><svg width="16" height="16" viewBox="0 0 16 16"><path d="M2.5 2.5h7l3 3v10h-10z" fill="#fff" stroke="#a0a0a0"/><path d="M11 0l1 2 2 .8-2 .8L11 6l-1-2.2L8 3l2-.7z" fill="#f5d37a" stroke="#c8961e" stroke-width=".6"/></svg></div>
<div class="ic" style="left:2467px;top:87px"><svg width="16" height="16" viewBox="0 0 16 16"><rect x="1.5" y="4.5" width="12" height="10" fill="#e8f0f8" stroke="#4a7ac8"/><path d="M1.5 7h12" stroke="#4a7ac8" stroke-width="2"/><path d="M9 8l5-6 2 2-6 5z" fill="#3aa040"/><path d="M7.5 10.5l2-2" stroke="#333"/></svg></div>
<div class="ic" style="left:2495px;top:88px"><svg width="6" height="14" viewBox="0 0 6 14"><circle cx="3" cy="2" r="1.6" fill="none" stroke="#444" stroke-width=".9"/><circle cx="3" cy="7" r="1.6" fill="none" stroke="#444" stroke-width=".9"/><circle cx="3" cy="12" r="1.6" fill="none" stroke="#444" stroke-width=".9"/></svg></div>
<div class="ic" style="left:2515px;top:88px"><svg width="11" height="5" viewBox="0 0 11 5"><rect x="0.7" y="0.7" width="9" height="2.8" fill="none" stroke="#000" stroke-width="1.4"/></svg></div>
<div class="ic" style="left:2539px;top:88px"><svg width="11" height="11" viewBox="0 0 11 11"><rect x="0.7" y="0.7" width="9" height="9" fill="none" stroke="#000" stroke-width="1.4"/><path d="M0.7 2.3h9" stroke="#000" stroke-width="1.4"/></svg></div>
<div style="left:1893px;top:109px;width:663px;height:342px;background:#fff"></div>
<div class="t" style="left:1899px;top:114.19999999999999px;">Name</div>
<div class="t" style="left:2119.8px;top:114.19999999999999px;">Type</div>
<div class="t" style="left:2341.7px;top:114.19999999999999px;">Value</div>
<div style="left:2113px;top:109px;width:1px;height:342px;background:#e8e8e8"></div>
<div style="left:2334px;top:109px;width:1px;height:342px;background:#e8e8e8"></div>
<div style="left:2555px;top:109px;width:1px;height:342px;background:#e8e8e8"></div>
<div style="left:1893px;top:157px;width:662px;height:1px;background:#e6e6e6"></div>
<div style="left:1893px;top:180px;width:662px;height:1px;background:#e6e6e6"></div>
<div style="left:1893px;top:203px;width:662px;height:1px;background:#e6e6e6"></div>
<div style="left:1893px;top:226px;width:662px;height:1px;background:#e6e6e6"></div>
<div style="left:1893px;top:249px;width:662px;height:1px;background:#e6e6e6"></div>
<div style="left:1893px;top:272px;width:662px;height:1px;background:#e6e6e6"></div>
<div style="left:1893px;top:295px;width:662px;height:1px;background:#e6e6e6"></div>
<div style="left:1893px;top:318px;width:662px;height:1px;background:#e6e6e6"></div>
<div style="left:1893px;top:341px;width:662px;height:1px;background:#e6e6e6"></div>
<div style="left:1893px;top:364px;width:662px;height:1px;background:#e6e6e6"></div>
<div style="left:1893px;top:387px;width:662px;height:1px;background:#e6e6e6"></div>
<div style="left:1893px;top:410px;width:662px;height:1px;background:#e6e6e6"></div>
<div style="left:1893px;top:433px;width:662px;height:1px;background:#e6e6e6"></div>
<div style="left:2335px;top:135px;width:220px;height:22px;background:#ffff00"></div>
<div class="ic" style="left:1915px;top:139px"><svg width="22" height="14" viewBox="0 0 22 14"><text x="0" y="11" font-family="Liberation Sans" font-weight="bold" font-size="10" fill="#2a4a7a">(x)=</text></svg></div>
<div class="t" style="left:1937.9px;top:137.6px;">i</div>
<div class="t" style="left:2119.2px;top:137.6px;">int</div>
<div class="t" style="left:2340.3px;top:137.6px;">1</div>
<div style="left:1893px;top:456px;width:644px;height:137px;background:#fff"></div>
<div class="ic" style="left:2541px;top:462px"><svg width="10" height="6" viewBox="0 0 10 6"><path d="M0 6h10L5 0z" fill="#a0a0a0"/></svg></div>
<div class="ic" style="left:2541px;top:577px"><svg width="10" height="6" viewBox="0 0 10 6"><path d="M0 0h10L5 6z" fill="#a0a0a0"/></svg></div>
<div class="ic" style="left:1899px;top:597px"><svg width="6" height="10" viewBox="0 0 6 10"><path d="M6 0v10L0 5z" fill="#a0a0a0"/></svg></div>
<div class="ic" style="left:2522px;top:597px"><svg width="6" height="10" viewBox="0 0 6 10"><path d="M0 0v10l6-5z" fill="#a0a0a0"/></svg></div>
<div style="left:1890px;top:620px;width:671px;height:534px;border:1px solid #a0a0a0;border-radius:3px 3px 0 0;background:#f0f0f0"></div>
<div style="left:1891px;top:620px;width:103px;height:25px;background:#fff"></div>
<div style="left:1891px;top:620px;width:103px;height:3px;background:#0078d7;border-radius:2px 2px 0 0"></div>
<div style="left:1994px;top:644px;width:566px;height:1px;background:#a0a0a0"></div>
<div style="left:1994px;top:622px;width:1px;height:22px;background:#c0c0c0"></div>
<div class="ic" style="left:1898px;top:625px"><svg width="12" height="16" viewBox="0 0 12 16"><path d="M2 3c0-2 8-2 8 0v10c0 2-8 2-8 0z" fill="#b8cdf0" stroke="#3a5aa8"/><ellipse cx="6" cy="3" rx="4" ry="1.5" fill="#e0eafa" stroke="#3a5aa8" stroke-width=".7"/></svg></div>
<div class="t" style="left:1914.5px;top:624.6px;">Memory</div>
<div class="ic" style="left:1978px;top:629px"><svg width="10" height="10" viewBox="0 0 10 10"><path d="M0.8 0.8l8.4 8.4M9.2 0.8l-8.4 8.4" stroke="#111" stroke-width="1"/></svg></div>
<div class="ic" style="left:2311px;top:625px"><svg width="16" height="16" viewBox="0 0 16 16"><path d="M2.5 2.5h7l3 3v10h-10z" fill="#fff" stroke="#a0a0a0"/><path d="M11 0l1 2 2 .8-2 .8L11 6l-1-2.2L8 3l2-.7z" fill="#f5d37a" stroke="#c8961e" stroke-width=".6"/></svg></div>
<div class="ic" style="left:2333px;top:625px"><svg width="16" height="16" viewBox="0 0 16 16"><rect x="1.5" y="4.5" width="12" height="10" fill="#e8f0f8" stroke="#4a7ac8"/><path d="M1.5 7h12" stroke="#4a7ac8" stroke-width="2"/><path d="M9 8l5-6 2 2-6 5z" fill="#3aa040"/><path d="M7.5 10.5l2-2" stroke="#333"/></svg></div>
<div style="left:2354px;top:625px;width:1px;height:18px;background:#9a9a9a"></div>
<div style="left:2360px;top:623px;width:23px;height:22px;background:#d5e7f8;border:1px solid #a8cdf0;border-radius:2px"></div>
<div class="ic" style="left:2363px;top:625px"><svg width="16" height="16" viewBox="0 0 16 16"><path d="M1 8h7" stroke="#f0a020" stroke-width="1.5"/><path d="M6 5l3 3-3 3" fill="none" stroke="#f0a020" stroke-width="1.5"/><rect x="11" y="2" width="3" height="3" fill="#4a7ac8"/><rect x="11" y="7" width="3" height="3" fill="#d04040"/><rect x="11" y="12" width="3" height="3" fill="#d04040"/><path d="M10 3v11" stroke="#777" stroke-width=".6"/></svg></div>
<div style="left:2385px;top:625px;width:1px;height:18px;background:#9a9a9a"></div>
<div class="ic" style="left:2392px;top:625px"><svg width="16" height="16" viewBox="0 0 16 16"><rect x="2.5" y="1.5" width="11" height="9" fill="#fff" stroke="#808080"/><path d="M8 1.5v9" stroke="#808080"/><path d="M3 12c2 3 8 3 10 0" fill="none" stroke="#3a7ac8" stroke-width="1.5"/><path d="M2 10l2 3 2-2M14 10l-2 3-2-2" fill="none" stroke="#3a7ac8" stroke-width="1"/></svg></div>
<div style="left:2415px;top:623px;width:23px;height:22px;background:#d5e7f8;border:1px solid #a8cdf0;border-radius:2px"></div>
<div class="ic" style="left:2418px;top:625px"><svg width="16" height="16" viewBox="0 0 16 16"><path d="M1 5l4-4v2.5h9v3H5V9z" fill="#fde7a8" stroke="#c08a18" stroke-width="1"/><path d="M15 11l-4-4v2.5H2v3h9V15z" fill="#fde7a8" stroke="#c08a18" stroke-width="1"/></svg></div>
<div style="left:2440px;top:625px;width:1px;height:18px;background:#9a9a9a"></div>
<div class="ic" style="left:2450px;top:625px"><svg width="16" height="16" viewBox="0 0 16 16"><rect x="1" y="1" width="5" height="5" fill="#f0d080" stroke="#a08030" stroke-width=".6"/><rect x="8" y="1" width="5" height="5" fill="#d0d0d0" stroke="#888" stroke-width=".6"/><rect x="1" y="8" width="5" height="5" fill="#d0d0d0" stroke="#888" stroke-width=".6"/><path d="M9 9c0-1 5-1 5 0v5c0 1-5 1-5 0z" fill="#9ab8e8" stroke="#3a5aa8" stroke-width=".7"/></svg></div>
<div class="ic" style="left:2472px;top:630px"><svg width="11" height="8" viewBox="0 0 11 8"><path d="M1 2h9l-4.5 5z" fill="#000"/></svg></div>
<div class="ic" style="left:2495px;top:626px"><svg width="6" height="14" viewBox="0 0 6 14"><circle cx="3" cy="2" r="1.6" fill="none" stroke="#444" stroke-width=".9"/><circle cx="3" cy="7" r="1.6" fill="none" stroke="#444" stroke-width=".9"/><circle cx="3" cy="12" r="1.6" fill="none" stroke="#444" stroke-width=".9"/></svg></div>
<div class="ic" style="left:2515px;top:626px"><svg width="11" height="5" viewBox="0 0 11 5"><rect x="0.7" y="0.7" width="9" height="2.8" fill="none" stroke="#000" stroke-width="1.4"/></svg></div>
<div class="ic" style="left:2539px;top:626px"><svg width="11" height="11" viewBox="0 0 11 11"><rect x="0.7" y="0.7" width="9" height="9" fill="none" stroke="#000" stroke-width="1.4"/><path d="M0.7 2.3h9" stroke="#000" stroke-width="1.4"/></svg></div>
<div style="left:1891px;top:645px;width:186px;height:507px;background:#fff"></div>
<div style="left:1892px;top:647px;width:181px;height:23px;background:#f0f0f0"></div>
<div style="left:1892px;top:670px;width:181px;height:1px;background:#a0a0a0"></div>
<div class="t" style="left:1893.2px;top:649.4px;">Monitors</div>
<div class="ic" style="left:2007px;top:651px"><svg width="16" height="16" viewBox="0 0 16 16"><path d="M8 1.5v13M1.5 8h13" stroke="#4aa02a" stroke-width="4"/><path d="M8 1.5v13M1.5 8h13" stroke="#9ad860" stroke-width="1.5"/></svg></div>
<div class="ic" style="left:2031px;top:651px"><svg width="16" height="16" viewBox="0 0 16 16"><path d="M2 2l12 12M14 2L2 14" stroke="#707070" stroke-width="3"/></svg></div>
<div class="ic" style="left:2054px;top:651px"><svg width="16" height="16" viewBox="0 0 16 16"><path d="M2 2l12 12M14 2L2 14" stroke="#b0b0b0" stroke-width="3"/><path d="M5 0l3 3M8 0l-3 3" stroke="#b0b0b0" stroke-width="1.3"/></svg></div>
<div style="left:1914px;top:672px;width:109px;height:21px;background:#d9d9d9;border:1px solid #adadad"></div>
<div class="ic" style="left:1918px;top:677px"><svg width="12" height="12" viewBox="0 0 12 12"><path d="M6 1l5 5-5 5-5-5z" fill="#4a8ad8" stroke="#2a5aa8" stroke-width=".6"/><path d="M6 1l5 5H1z" fill="#9ac4f4"/></svg></div>
<div class="t" style="left:1941.2px;top:674.5px;">0x08000000</div>
<div style="left:2073px;top:645px;width:4px;height:507px;background:#f0f0f0"></div>
<div style="left:2077px;top:647px;width:479px;height:503px;border:2px solid #808080;background:#f0f0f0"></div>
<div style="left:2079px;top:648px;width:237px;height:23px;background:linear-gradient(#e6eef8,#b9cee5);border-top:2px solid #0078d7"></div>
<div style="left:2315px;top:650px;width:1px;height:21px;background:#a0a0a0"></div>
<div style="left:2461px;top:650px;width:1px;height:21px;background:#a0a0a0"></div>
<div class="t" style="left:2080.7px;top:651.6px;">0x08000000 : 0x8000000 &lt;Hex&gt;</div>
<div class="ic" style="left:2299px;top:656px"><svg width="10" height="10" viewBox="0 0 10 10"><path d="M0.8 0.8l8.4 8.4M9.2 0.8l-8.4 8.4" stroke="#111" stroke-width="1"/></svg></div>
<div class="ic" style="left:2321px;top:653px"><svg width="16" height="16" viewBox="0 0 16 16"><path d="M8 1.5v13M1.5 8h13" stroke="#4aa02a" stroke-width="4"/><path d="M8 1.5v13M1.5 8h13" stroke="#9ad860" stroke-width="1.5"/></svg></div>
<div class="t" style="left:2341.7px;top:651.6px;">New Renderings...</div>
<div style="left:2079px;top:671px;width:475px;height:1px;background:#a0a0a0"></div>
<div style="left:2079px;top:672px;width:454px;height:456px;background:#fff"></div>
<div style="left:2533px;top:672px;width:21px;height:456px;background:#f0f0f0"></div>
<div style="left:2543px;top:837px;width:3px;height:120px;background:#8a8a8a;border-radius:2px"></div>
<div style="left:2100px;top:1136px;width:310px;height:3px;background:#8a8a8a;border-radius:2px"></div>
<div style="left:2256px;top:672px;width:2px;height:456px;background:#eef2f8"></div>
<div style="left:2362px;top:672px;width:2px;height:456px;background:#eef2f8"></div>
<div style="left:2468px;top:672px;width:2px;height:456px;background:#eef2f8"></div>
<div class="m" style="left:2085.3px;top:678px;">Address</div>
<div class="m" style="left:2264px;top:678px;">0 - 3</div>
<div class="m" style="left:2369.2px;top:678px;">4 - 7</div>
<div class="m" style="left:2475.4px;top:678px;">8 - B</div>
<div style="left:2079px;top:723px;width:454px;height:1px;background:#eeeeee"></div>
<div class="m" style="left:2272.8px;top:702.5px;">A00C0020</div>
<div class="m" style="left:2094.4px;top:702.5px;">0000000008000000</div>
<div class="m" style="left:2379.5px;top:702.5px;">C9030008</div>
<div class="m" style="left:2485.6px;top:702.5px;">4B030</div>
<div style="left:2079px;top:747px;width:454px;height:1px;background:#eeeeee"></div>
<div class="m" style="left:2272.8px;top:726.5px;">00000000</div>
<div class="m" style="left:2094.4px;top:726.5px;">0000000008000010</div>
<div class="m" style="left:2379.5px;top:726.5px;">00000000</div>
<div class="m" style="left:2485.6px;top:726.5px;">00000</div>
<div style="left:2079px;top:771px;width:454px;height:1px;background:#eeeeee"></div>
<div style="left:2258px;top:748px;width:104px;height:23px;background:#0078d7"></div>
<div class="m" style="left:2272.8px;top:750.5px;color:#fff">00000000</div>
<div class="m" style="left:2094.4px;top:750.5px;">0000000008000020</div>
<div class="m" style="left:2379.5px;top:750.5px;">00000000</div>
<div class="m" style="left:2485.6px;top:750.5px;">00000</div>
<div style="left:2079px;top:795px;width:454px;height:1px;background:#eeeeee"></div>
<div class="m" style="left:2272.8px;top:774.5px;">00000000</div>
<div class="m" style="left:2094.4px;top:774.5px;">0000000008000030</div>
<div class="m" style="left:2379.5px;top:774.5px;">00000000</div>
<div class="m" style="left:2485.6px;top:774.5px;">79030</div>
<div style="left:2079px;top:819px;width:454px;height:1px;background:#eeeeee"></div>
<div class="m" style="left:2272.8px;top:798.5px;">3D040008</div>
<div class="m" style="left:2094.4px;top:798.5px;">0000000008000040</div>
<div class="m" style="left:2379.5px;top:798.5px;">3D040008</div>
<div class="m" style="left:2485.6px;top:798.5px;">00000</div>
<div style="left:2079px;top:843px;width:454px;height:1px;background:#eeeeee"></div>
<div class="m" style="left:2272.8px;top:822.5px;">3D040008</div>
<div class="m" style="left:2094.4px;top:822.5px;">0000000008000050</div>
<div class="m" style="left:2379.5px;top:822.5px;">3D040008</div>
<div class="m" style="left:2485.6px;top:822.5px;">3D040</div>
<div style="left:2079px;top:867px;width:454px;height:1px;background:#eeeeee"></div>
<div class="m" style="left:2272.8px;top:846.5px;">3D040008</div>
<div class="m" style="left:2094.4px;top:846.5px;">0000000008000060</div>
<div class="m" style="left:2379.5px;top:846.5px;">3D040008</div>
<div class="m" style="left:2485.6px;top:846.5px;">3D040</div>
<div style="left:2079px;top:891px;width:454px;height:1px;background:#eeeeee"></div>
<div class="m" style="left:2272.8px;top:870.5px;">3D040008</div>
<div class="m" style="left:2094.4px;top:870.5px;">0000000008000070</div>
<div class="m" style="left:2379.5px;top:870.5px;">3D040008</div>
<div class="m" style="left:2485.6px;top:870.5px;">3D040</div>
<div style="left:2079px;top:915px;width:454px;height:1px;background:#eeeeee"></div>
<div class="m" style="left:2272.8px;top:894.5px;">3D040008</div>
<div class="m" style="left:2094.4px;top:894.5px;">0000000008000080</div>
<div class="m" style="left:2379.5px;top:894.5px;">3D040008</div>
<div class="m" style="left:2485.6px;top:894.5px;">3D040</div>
<div style="left:2079px;top:939px;width:454px;height:1px;background:#eeeeee"></div>
<div class="m" style="left:2272.8px;top:918.5px;">3D040008</div>
<div class="m" style="left:2094.4px;top:918.5px;">0000000008000090</div>
<div class="m" style="left:2379.5px;top:918.5px;">3D040008</div>
<div class="m" style="left:2485.6px;top:918.5px;">3D040</div>
<div style="left:2079px;top:963px;width:454px;height:1px;background:#eeeeee"></div>
<div class="m" style="left:2272.8px;top:942.5px;">3D040008</div>
<div class="m" style="left:2094.4px;top:942.5px;">00000000080000A0</div>
<div class="m" style="left:2379.5px;top:942.5px;">3D040008</div>
<div class="m" style="left:2485.6px;top:942.5px;">3D040</div>
<div style="left:2079px;top:987px;width:454px;height:1px;background:#eeeeee"></div>
<div class="m" style="left:2272.8px;top:966.5px;">3D040008</div>
<div class="m" style="left:2094.4px;top:966.5px;">00000000080000B0</div>
<div class="m" style="left:2379.5px;top:966.5px;">3D040008</div>
<div class="m" style="left:2485.6px;top:966.5px;">3D040</div>
<div style="left:2079px;top:1011px;width:454px;height:1px;background:#eeeeee"></div>
<div class="m" style="left:2272.8px;top:990.5px;">00000000</div>
<div class="m" style="left:2094.4px;top:990.5px;">00000000080000C0</div>
<div class="m" style="left:2379.5px;top:990.5px;">3D040008</div>
<div class="m" style="left:2485.6px;top:990.5px;">3D040</div>
<div style="left:2079px;top:1035px;width:454px;height:1px;background:#eeeeee"></div>
<div class="m" style="left:2272.8px;top:1014.5px;">3D040008</div>
<div class="m" style="left:2094.4px;top:1014.5px;">00000000080000D0</div>
<div class="m" style="left:2379.5px;top:1014.5px;">3D040008</div>
<div class="m" style="left:2485.6px;top:1014.5px;">3D040</div>
<div style="left:2079px;top:1059px;width:454px;height:1px;background:#eeeeee"></div>
<div class="m" style="left:2272.8px;top:1038.5px;">49084000</div>
<div class="m" style="left:2094.4px;top:1038.5px;">00000000080000E0</div>
<div class="m" style="left:2379.5px;top:1038.5px;">4900095E</div>
<div class="m" style="left:2485.6px;top:1038.5px;">49008</div>
<div style="left:2079px;top:1083px;width:454px;height:1px;background:#eeeeee"></div>
<div class="m" style="left:2272.8px;top:1062.5px;">10B540F2</div>
<div class="m" style="left:2094.4px;top:1062.5px;">00000000080000F0</div>
<div class="m" style="left:2379.5px;top:1062.5px;">6C04C2F2</div>
<div class="m" style="left:2485.6px;top:1062.5px;">00042</div>
<div style="left:2079px;top:1107px;width:454px;height:1px;background:#eeeeee"></div>
<div class="m" style="left:2272.8px;top:1086.5px;">0003C0F2</div>
<div class="m" style="left:2094.4px;top:1086.5px;">0000000008000100</div>
<div class="m" style="left:2379.5px;top:1086.5px;">00032BB1</div>
<div class="m" style="left:2485.6px;top:1086.5px;">41F68</div>
<div style="left:2079px;top:1131px;width:454px;height:1px;background:#eeeeee"></div>
<div class="m" style="left:2272.8px;top:1110.5px;">00E000BF</div>
<div class="m" style="left:2094.4px;top:1110.5px;">0000000008000110</div>
<div class="m" style="left:2379.5px;top:1110.5px;">01232370</div>
<div class="m" style="left:2485.6px;top:1110.5px;">10BDC</div>
<div style="left:2533px;top:672px;width:21px;height:456px;background:#f0f0f0"></div>
<div style="left:2543px;top:837px;width:3px;height:120px;background:#8a8a8a;border-radius:2px"></div>
<div style="left:643px;top:1157px;width:957px;height:357px;border:1px solid #a0a0a0;border-radius:3px 3px 0 0;background:#f0f0f0"></div>
<div style="left:644px;top:1157px;width:102px;height:25px;background:#f0f0f0"></div>
<div style="left:644px;top:1157px;width:101px;height:3px;background:#666;border-radius:2px 2px 0 0"></div>
<div style="left:745px;top:1181px;width:854px;height:1px;background:#a0a0a0"></div>
<div style="left:745px;top:1159px;width:1px;height:22px;background:#c0c0c0"></div>
<div class="ic" style="left:649px;top:1162px"><svg width="16" height="16" viewBox="0 0 16 16"><rect x="1.5" y="1.5" width="13" height="10" fill="#e8f0fa" stroke="#2a5aa8" stroke-width="1.4"/><path d="M4 5h8M4 8h5" stroke="#2a5aa8"/><path d="M4 14h8" stroke="#2a5aa8" stroke-width="2"/></svg></div>
<div class="t" style="left:667.2px;top:1162px;">Console</div>
<div class="ic" style="left:729px;top:1166px"><svg width="10" height="10" viewBox="0 0 10 10"><path d="M0.8 0.8l8.4 8.4M9.2 0.8l-8.4 8.4" stroke="#111" stroke-width="1"/></svg></div>
<div class="ic" style="left:1246px;top:1161px"><svg width="16" height="16" viewBox="0 0 16 16"><rect x="2.5" y="2.5" width="11" height="11" rx="1.5" fill="#e8262b" stroke="#b01018"/></svg></div>
<div class="ic" style="left:1270px;top:1161px"><svg width="16" height="16" viewBox="0 0 16 16"><path d="M2 2l12 12M14 2L2 14" stroke="#a0a0a0" stroke-width="3"/></svg></div>
<div class="ic" style="left:1292px;top:1161px"><svg width="16" height="16" viewBox="0 0 16 16"><path d="M2 2l12 12M14 2L2 14" stroke="#a8a8a8" stroke-width="2.6"/><path d="M3 1l10 10" stroke="#d8d8d8" stroke-width=".8"/></svg></div>
<div style="left:1314px;top:1160px;width:1px;height:18px;background:#9a9a9a"></div>
<div class="ic" style="left:1323px;top:1161px"><svg width="16" height="16" viewBox="0 0 16 16"><path d="M1.5 0.5h8l3 3v12h-11z" fill="#fff" stroke="#8090b0"/><path d="M3 4h6M3 6h6M3 8h5" stroke="#4a7ac8" stroke-width=".8"/><path d="M9 10l5 5M14 10l-5 5" stroke="#555" stroke-width="1.5"/></svg></div>
<div class="ic" style="left:1346px;top:1161px"><svg width="16" height="16" viewBox="0 0 16 16"><rect x="10" y="1.5" width="5" height="14" fill="#fff" stroke="#888"/><path d="M11 4h3M11 7h3M11 10h3" stroke="#4a7ac8"/><rect x="1" y="8" width="8" height="7" fill="#f0c040" stroke="#a07818"/><path d="M3 8V5c0-3 4-3 4 0v3" fill="none" stroke="#888" stroke-width="1.3"/></svg></div>
<div class="ic" style="left:1370px;top:1161px"><svg width="16" height="16" viewBox="0 0 16 16"><rect x="1.5" y="1.5" width="11" height="13" fill="#fff" stroke="#b09050"/><path d="M3 4h7M3 7h7M3 10h4" stroke="#4a7ac8"/><path d="M15 5v5h-5M12 8l-2 2 2 2" fill="none" stroke="#d0a020" stroke-width="1.5"/></svg></div>
<div style="left:1389px;top:1160px;width:23px;height:22px;background:#d5e7f8;border:1px solid #a8cdf0;border-radius:2px"></div>
<div class="ic" style="left:1392px;top:1161px"><svg width="16" height="16" viewBox="0 0 16 16"><rect x="1.5" y="1.5" width="13" height="9" fill="#fff" stroke="#2a5aa8"/><path d="M4 4h8M4 7h8" stroke="#2a5aa8"/><path d="M5 11v3M3 15h5" stroke="#2a5aa8" stroke-width="1.4"/></svg></div>
<div style="left:1412px;top:1160px;width:23px;height:22px;background:#d5e7f8;border:1px solid #a8cdf0;border-radius:2px"></div>
<div class="ic" style="left:1415px;top:1161px"><svg width="16" height="16" viewBox="0 0 16 16"><rect x="1.5" y="1.5" width="13" height="9" fill="#fff" stroke="#2a5aa8"/><path d="M6 3l4 4M10 3L6 7" stroke="#d02020" stroke-width="1.5"/><path d="M5 11v3M3 15h5" stroke="#2a5aa8" stroke-width="1.4"/></svg></div>
<div style="left:1437px;top:1160px;width:1px;height:18px;background:#9a9a9a"></div>
<div class="ic" style="left:1447px;top:1161px"><svg width="16" height="16" viewBox="0 0 16 16"><rect x="1.5" y="4.5" width="12" height="10" fill="#e8f0f8" stroke="#4a7ac8"/><path d="M1.5 7h12" stroke="#4a7ac8" stroke-width="2"/><path d="M9 8l5-6 2 2-6 5z" fill="#3aa040"/><path d="M7.5 10.5l2-2" stroke="#333"/></svg></div>
<div class="ic" style="left:1470px;top:1161px"><svg width="16" height="16" viewBox="0 0 16 16"><rect x="1.5" y="1.5" width="13" height="10" fill="#e8f0fa" stroke="#2a5aa8" stroke-width="1.4"/><path d="M4 5h8M4 8h5" stroke="#2a5aa8"/><path d="M4 14h8" stroke="#2a5aa8" stroke-width="2"/></svg></div>
<div class="ic" style="left:1494px;top:1166px"><svg width="11" height="8" viewBox="0 0 11 8"><path d="M1 2h9l-4.5 5z" fill="#000"/></svg></div>
<div class="ic" style="left:1512px;top:1161px"><svg width="16" height="16" viewBox="0 0 16 16"><rect x="1.5" y="3.5" width="12" height="11" fill="#fff" stroke="#8a7a50"/><rect x="2" y="4" width="11" height="2" fill="#4b8bd4"/><path d="M12 0l1.2 2.3 2.3.7-2.3.9L12 6l-1.2-2.1L8.5 3l2.3-.7z" fill="#f5d37a" stroke="#c8961e" stroke-width=".6"/></svg></div>
<div class="ic" style="left:1536px;top:1166px"><svg width="11" height="8" viewBox="0 0 11 8"><path d="M1 2h9l-4.5 5z" fill="#000"/></svg></div>
<div class="ic" style="left:1556px;top:1164px"><svg width="11" height="5" viewBox="0 0 11 5"><rect x="0.7" y="0.7" width="9" height="2.8" fill="none" stroke="#000" stroke-width="1.4"/></svg></div>
<div class="ic" style="left:1579px;top:1164px"><svg width="11" height="11" viewBox="0 0 11 11"><rect x="0.7" y="0.7" width="9" height="9" fill="none" stroke="#000" stroke-width="1.4"/><path d="M0.7 2.3h9" stroke="#000" stroke-width="1.4"/></svg></div>
<div class="t" style="left:646.5px;top:1185px;">GD32C231_JLink [GDB General Debugging]  [pid: 25512]</div>
<div style="left:644px;top:1204px;width:953px;height:1px;background:#a0a0a0"></div>
<div style="left:646px;top:1206px;width:931px;height:285px;background:#fff"></div>
<div class="m" style="left:648px;top:1206.5px;">Read register &#x27;r12&#x27; (4 bytes) from hardware: 0x00000000</div>
<div class="m" style="left:648px;top:1226.5px;">Read register &#x27;sp&#x27; (4 bytes) from hardware: 0x20000C90</div>
<div class="m" style="left:648px;top:1246.5px;">Read register &#x27;lr&#x27; (4 bytes) from hardware: 0x080014AB</div>
<div class="m" style="left:648px;top:1266.5px;">Read register &#x27;pc&#x27; (4 bytes) from hardware: 0x080003B0</div>
<div class="m" style="left:648px;top:1286.5px;">Read register &#x27;xpsr&#x27; (4 bytes) from hardware: 0x01000000</div>
<div class="m" style="left:648px;top:1306.5px;">Removing breakpoint @ address 0x08000392, Size = 2</div>
<div class="m" style="left:648px;top:1326.5px;">Removing breakpoint @ address 0x080003B0, Size = 2</div>
<div class="m" style="left:648px;top:1346.5px;">Read 4 bytes @ address 0x080003B0 (Data = 0x1E53687A)</div>
<div class="m" style="left:648px;top:1366.5px;">Reading 64 bytes @ address 0x20000C80</div>
<div class="m" style="left:648px;top:1386.5px;">Read 4 bytes @ address 0x08000418 (Data = 0x1FFF0BE0)</div>
<div class="m" style="left:648px;top:1406.5px;">Reading 64 bytes @ address 0x08000400</div>
<div class="m" style="left:648px;top:1426.5px;">Read 4 bytes @ address 0x0800043A (Data = 0xE7FE2000)</div>
<div class="m" style="left:648px;top:1446.5px;">Reading 928 bytes @ address 0x07FFFEC0</div>
<div style="left:1585px;top:1448px;width:3px;height:21px;background:#8a8a8a;border-radius:2px"></div>
<div style="left:666px;top:1499px;width:434px;height:3px;background:#8a8a8a;border-radius:2px"></div>
<div style="left:1604px;top:1157px;width:957px;height:357px;border:1px solid #a0a0a0;border-radius:3px 3px 0 0;background:#f0f0f0"></div>
<div style="left:1605px;top:1157px;width:108px;height:3px;background:#666;border-radius:2px 2px 0 0"></div>
<div style="left:1713px;top:1181px;width:847px;height:1px;background:#a0a0a0"></div>
<div style="left:1713px;top:1159px;width:1px;height:22px;background:#c0c0c0"></div>
<div style="left:1803px;top:1159px;width:1px;height:22px;background:#c0c0c0"></div>
<div style="left:1910px;top:1159px;width:1px;height:22px;background:#c0c0c0"></div>
<div style="left:2018px;top:1159px;width:1px;height:22px;background:#c0c0c0"></div>
<div style="left:2171px;top:1159px;width:1px;height:22px;background:#c0c0c0"></div>
<div class="ic" style="left:1609px;top:1162px"><svg width="16" height="16" viewBox="0 0 16 16"><text x="0" y="7" font-family="Liberation Sans" font-weight="bold" font-size="7.5" fill="#3a8ad0" letter-spacing="-.5">1010</text><text x="0" y="15" font-family="Liberation Sans" font-weight="bold" font-size="7.5" fill="#3a8ad0" letter-spacing="-.5">0101</text></svg></div>
<div class="t" style="left:1628.2px;top:1162px;">Registers</div>
<div class="ic" style="left:1697px;top:1166px"><svg width="10" height="10" viewBox="0 0 10 10"><path d="M0.8 0.8l8.4 8.4M9.2 0.8l-8.4 8.4" stroke="#111" stroke-width="1"/></svg></div>
<div class="ic" style="left:1718px;top:1161px"><svg width="16" height="16" viewBox="0 0 16 16"><rect x="0.5" y="0.5" width="14" height="15" fill="#fff" stroke="#8a6a6a"/><circle cx="7" cy="5" r="2.5" fill="#d04040"/><path d="M3 13l4-6 4 6z" fill="#e8a020"/><rect x="2" y="12" width="11" height="3" fill="#d04040"/></svg></div>
<div class="t" style="left:1738px;top:1162px;">Problems</div>
<div class="ic" style="left:1808px;top:1161px"><svg width="16" height="16" viewBox="0 0 16 16"><circle cx="8" cy="8" r="7" fill="#5a8ad8" stroke="#2a5aa8"/><path d="M6 4.5l6 3.5-6 3.5z" fill="#fff"/></svg></div>
<div class="t" style="left:1828.6px;top:1162px;">Executables</div>
<div class="ic" style="left:1915px;top:1161px"><svg width="16" height="16" viewBox="0 0 16 16"><rect x="1.5" y="1.5" width="11" height="14" fill="#fff" stroke="#a08040"/><path d="M2 1.5h10" stroke="#2a4a9a" stroke-dasharray="1 1" stroke-width="1.5"/><path d="M9 5v6c0 2-4 2-4 0" fill="none" stroke="#2a6ab8" stroke-width="2"/><path d="M10 15.5l3-3v3z" fill="#4aa84a"/></svg></div>
<div class="t" style="left:1934.9px;top:1162px;">Debug Shell</div>
<div class="ic" style="left:2024px;top:1162px"><svg width="16" height="16" viewBox="0 0 16 16"><rect x="0.5" y="0.5" width="14" height="12" fill="#d8e4f4" stroke="#2a4a8a"/><path d="M2 3h9M2 6h7" stroke="#2a4a8a"/><circle cx="11" cy="11.5" r="3.5" fill="#4aa84a" stroke="#2a7a2a"/></svg></div>
<div class="t" style="left:2043.7px;top:1162px;">Debugger Console</div>
<div class="ic" style="left:2368px;top:1162px"><svg width="16" height="16" viewBox="0 0 16 16"><rect x="1.5" y="1.5" width="9" height="9" fill="#fff" stroke="#999"/><path d="M1.5 5.5h9M5.5 1.5v9" stroke="#bbb"/></svg></div>
<div style="left:2388px;top:1162px;width:23px;height:22px;background:#d5e7f8;border:1px solid #a8cdf0;border-radius:2px"></div>
<div class="ic" style="left:2391px;top:1162px"><svg width="16" height="16" viewBox="0 0 16 16"><path d="M1 8h7" stroke="#f0a020" stroke-width="1.5"/><path d="M6 5l3 3-3 3" fill="none" stroke="#f0a020" stroke-width="1.5"/><rect x="11" y="2" width="3" height="3" fill="#4a7ac8"/><rect x="11" y="7" width="3" height="3" fill="#d04040"/><rect x="11" y="12" width="3" height="3" fill="#d04040"/><path d="M10 3v11" stroke="#777" stroke-width=".6"/></svg></div>
<div class="ic" style="left:2415px;top:1162px"><svg width="16" height="16" viewBox="0 0 16 16"><rect x="1.5" y="2.5" width="12" height="11" fill="#fff" stroke="#4a7ac8"/><path d="M4 8h7" stroke="#2a5aa8" stroke-width="1.5"/></svg></div>
<div style="left:2437px;top:1161px;width:1px;height:18px;background:#9a9a9a"></div>
<div class="ic" style="left:2445px;top:1161px"><svg width="16" height="16" viewBox="0 0 16 16"><path d="M2.5 2.5h7l3 3v10h-10z" fill="#fff" stroke="#a0a0a0"/><path d="M11 0l1 2 2 .8-2 .8L11 6l-1-2.2L8 3l2-.7z" fill="#f5d37a" stroke="#c8961e" stroke-width=".6"/></svg></div>
<div class="ic" style="left:2468px;top:1161px"><svg width="16" height="16" viewBox="0 0 16 16"><rect x="1.5" y="4.5" width="12" height="10" fill="#e8f0f8" stroke="#4a7ac8"/><path d="M1.5 7h12" stroke="#4a7ac8" stroke-width="2"/><path d="M9 8l5-6 2 2-6 5z" fill="#3aa040"/><path d="M7.5 10.5l2-2" stroke="#333"/></svg></div>
<div class="ic" style="left:2496px;top:1163px"><svg width="6" height="14" viewBox="0 0 6 14"><circle cx="3" cy="2" r="1.6" fill="none" stroke="#444" stroke-width=".9"/><circle cx="3" cy="7" r="1.6" fill="none" stroke="#444" stroke-width=".9"/><circle cx="3" cy="12" r="1.6" fill="none" stroke="#444" stroke-width=".9"/></svg></div>
<div class="ic" style="left:2517px;top:1164px"><svg width="11" height="5" viewBox="0 0 11 5"><rect x="0.7" y="0.7" width="9" height="2.8" fill="none" stroke="#000" stroke-width="1.4"/></svg></div>
<div class="ic" style="left:2540px;top:1164px"><svg width="11" height="11" viewBox="0 0 11 11"><rect x="0.7" y="0.7" width="9" height="9" fill="none" stroke="#000" stroke-width="1.4"/><path d="M0.7 2.3h9" stroke="#000" stroke-width="1.4"/></svg></div>
<div style="left:1607px;top:1184px;width:931px;height:160px;background:#fff"></div>
<div style="left:2243px;top:1184px;width:1px;height:160px;background:#e8e8e8"></div>
<div class="t" style="left:1613px;top:1188.3px;">Name</div>
<div class="t" style="left:2250.1px;top:1188.3px;">Value</div>
<div class="ic" style="left:1614px;top:1217px"><svg width="10" height="7" viewBox="0 0 10 7"><path d="M0.8 1.2l3.7 3.6 3.7-3.6" fill="none" stroke="#222" stroke-width="1.1"/></svg></div>
<div class="ic" style="left:1631px;top:1211px"><svg width="16" height="16" viewBox="0 0 16 16"><circle cx="3" cy="2.5" r="1.6" fill="#5a7ab8"/><circle cx="8" cy="2.5" r="1.6" fill="#d0b040"/><circle cx="13" cy="2.5" r="1.6" fill="#5a7ab8"/><path d="M0.5 9l1-5h3l1 5zM5.5 9l1-5h3l1 5zM10.5 9l1-5h3l1 5z" fill="#7a90c8"/><path d="M5.5 9l1-5h3l1 5z" fill="#e0c050"/><text x="0" y="15.5" font-family="Liberation Sans" font-size="7" fill="#4a5a7a" letter-spacing="-.3">0101</text></svg></div>
<div class="t" style="left:1651.3px;top:1212px;">General Registers</div>
<div style="left:1607px;top:1232px;width:931px;height:1px;background:#e6e6e6"></div>
<div style="left:2244px;top:1233px;width:293px;height:22px;background:#ffff00"></div>
<div class="ic" style="left:1651px;top:1236px"><svg width="16" height="16" viewBox="0 0 16 16"><text x="0" y="7" font-family="Liberation Sans" font-size="7.5" fill="#4a5a7a" letter-spacing="-.5">1010</text><text x="0" y="15" font-family="Liberation Sans" font-size="7.5" fill="#4a5a7a" letter-spacing="-.5">0101</text></svg></div>
<div class="t" style="left:1671.5px;top:1235.5px;">r0</div>
<div class="t" style="left:2249.2px;top:1235.5px;">13</div>
<div style="left:1607px;top:1255px;width:931px;height:1px;background:#e6e6e6"></div>
<div style="left:2244px;top:1256px;width:293px;height:22px;background:#ffff00"></div>
<div class="ic" style="left:1651px;top:1259px"><svg width="16" height="16" viewBox="0 0 16 16"><text x="0" y="7" font-family="Liberation Sans" font-size="7.5" fill="#4a5a7a" letter-spacing="-.5">1010</text><text x="0" y="15" font-family="Liberation Sans" font-size="7.5" fill="#4a5a7a" letter-spacing="-.5">0101</text></svg></div>
<div class="t" style="left:1671.5px;top:1258.5px;">r1</div>
<div class="t" style="left:2249.2px;top:1258.5px;">134225308</div>
<div style="left:1607px;top:1278px;width:931px;height:1px;background:#e6e6e6"></div>
<div style="left:2244px;top:1279px;width:293px;height:22px;background:#ffff00"></div>
<div class="ic" style="left:1651px;top:1282px"><svg width="16" height="16" viewBox="0 0 16 16"><text x="0" y="7" font-family="Liberation Sans" font-size="7.5" fill="#4a5a7a" letter-spacing="-.5">1010</text><text x="0" y="15" font-family="Liberation Sans" font-size="7.5" fill="#4a5a7a" letter-spacing="-.5">0101</text></svg></div>
<div class="t" style="left:1671.5px;top:1281.5px;">r2</div>
<div class="t" style="left:2249.2px;top:1281.5px;">536874116</div>
<div style="left:1607px;top:1301px;width:931px;height:1px;background:#e6e6e6"></div>
<div style="left:2244px;top:1302px;width:293px;height:22px;background:#ffff00"></div>
<div class="ic" style="left:1651px;top:1305px"><svg width="16" height="16" viewBox="0 0 16 16"><text x="0" y="7" font-family="Liberation Sans" font-size="7.5" fill="#4a5a7a" letter-spacing="-.5">1010</text><text x="0" y="15" font-family="Liberation Sans" font-size="7.5" fill="#4a5a7a" letter-spacing="-.5">0101</text></svg></div>
<div class="t" style="left:1671.5px;top:1304.5px;">r3</div>
<div class="t" style="left:2249.2px;top:1304.5px;">134218673</div>
<div style="left:1607px;top:1324px;width:931px;height:1px;background:#e6e6e6"></div>
<div class="ic" style="left:1651px;top:1328px"><svg width="16" height="16" viewBox="0 0 16 16"><text x="0" y="7" font-family="Liberation Sans" font-size="7.5" fill="#4a5a7a" letter-spacing="-.5">1010</text><text x="0" y="15" font-family="Liberation Sans" font-size="7.5" fill="#4a5a7a" letter-spacing="-.5">0101</text></svg></div>
<div class="t" style="left:1671.5px;top:1327.5px;">r4</div>
<div class="t" style="left:2249.2px;top:1327.5px;">4294967295</div>
<div style="left:2546px;top:1205px;width:3px;height:21px;background:#8a8a8a;border-radius:2px"></div>
<div style="left:1627px;top:1353px;width:432px;height:3px;background:#8a8a8a;border-radius:2px"></div>
<div style="left:1607px;top:1370px;width:931px;height:121px;background:#fff"></div>
<div class="ic" style="left:2542px;top:1377px"><svg width="10" height="6" viewBox="0 0 10 6"><path d="M0 6h10L5 0z" fill="#a0a0a0"/></svg></div>
<div class="ic" style="left:2542px;top:1476px"><svg width="10" height="6" viewBox="0 0 10 6"><path d="M0 0h10L5 6z" fill="#a0a0a0"/></svg></div>
<div class="ic" style="left:1613px;top:1495px"><svg width="6" height="10" viewBox="0 0 6 10"><path d="M6 0v10L0 5z" fill="#a0a0a0"/></svg></div>
<div class="ic" style="left:2524px;top:1495px"><svg width="6" height="10" viewBox="0 0 6 10"><path d="M0 0v10l6-5z" fill="#a0a0a0"/></svg></div>
<div style="left:2203px;top:1520px;width:1px;height:2px;background:#909090"></div>
<div style="left:2203px;top:1523px;width:1px;height:2px;background:#909090"></div>
<div style="left:2203px;top:1526px;width:1px;height:2px;background:#909090"></div>
<div style="left:2203px;top:1529px;width:1px;height:2px;background:#909090"></div>
<div style="left:2203px;top:1532px;width:1px;height:2px;background:#909090"></div>
</body></html>
